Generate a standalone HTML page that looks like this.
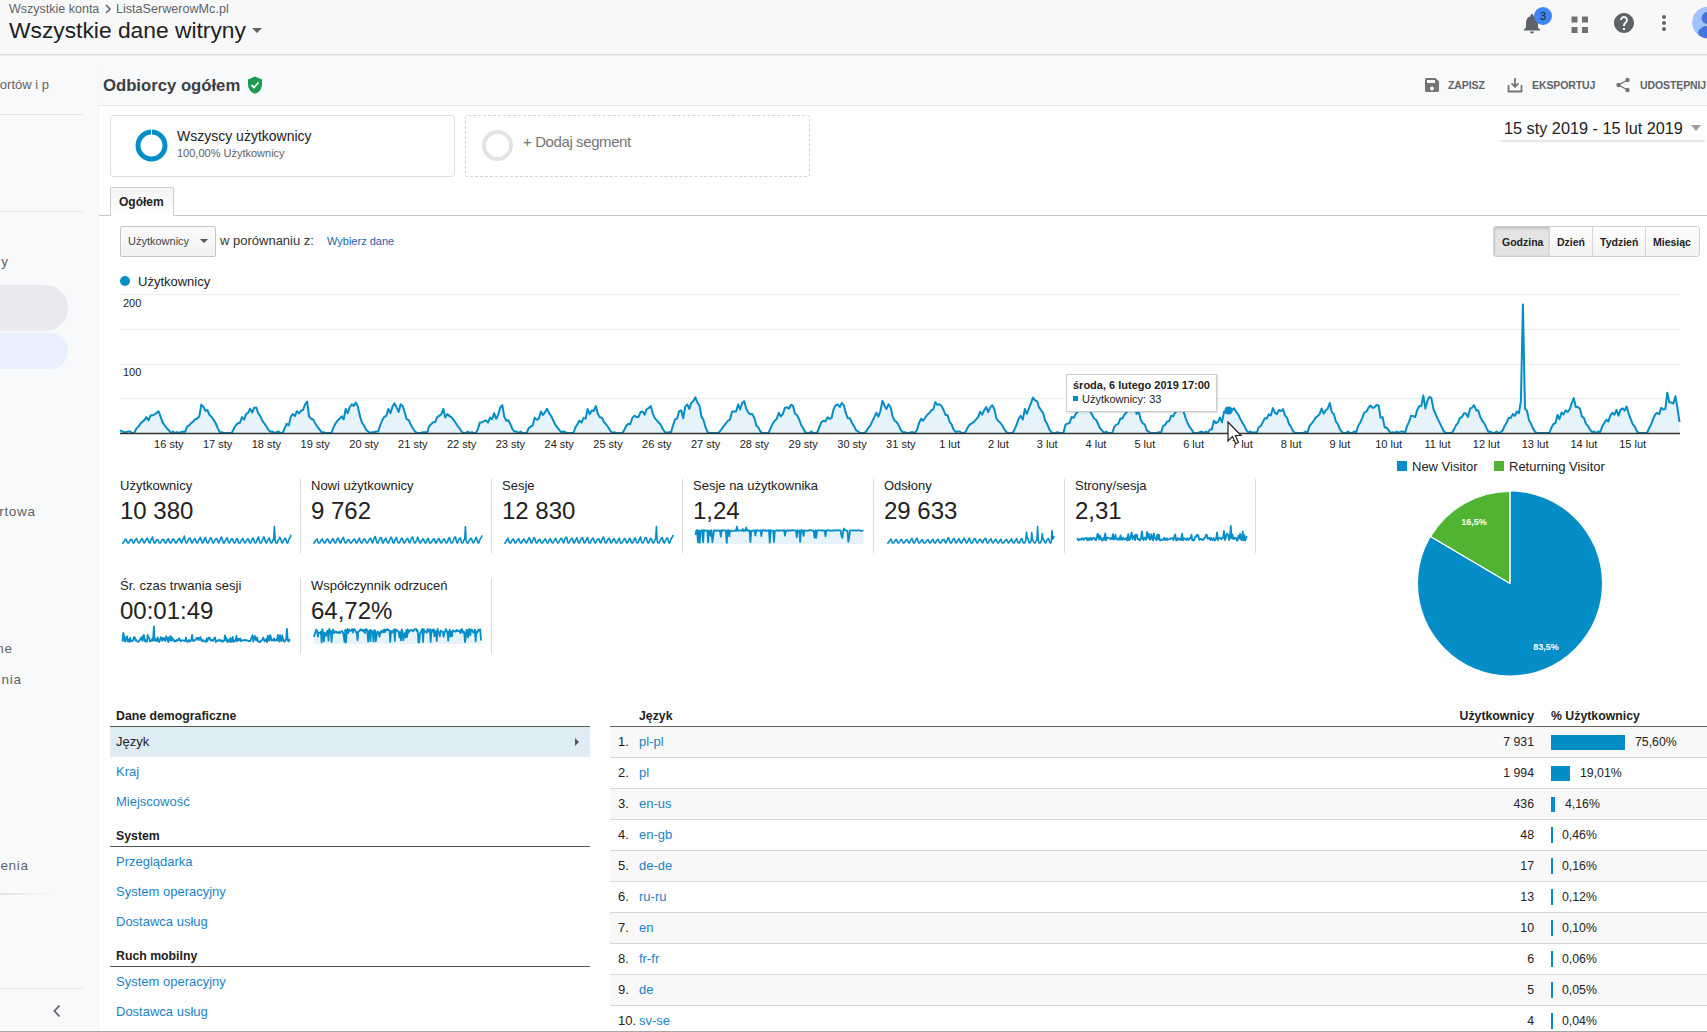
<!DOCTYPE html><html><head><meta charset="utf-8"><style>
*{margin:0;padding:0;box-sizing:border-box}
html,body{width:1707px;height:1032px;overflow:hidden;background:#f8f9fa;font-family:"Liberation Sans",sans-serif;color:#202124}
.a{position:absolute;white-space:nowrap}
.lnk{color:#1a83c6}
</style></head><body>
<div class="a" style="left:0;top:0;width:1707px;height:55px;background:#f8f8f8;border-bottom:1px solid #dadce0"></div><div class="a" style="left:0;top:55px;width:1707px;height:1px;background:#eceef0"></div><div class="a" style="left:9px;top:1px;font-size:12.5px;line-height:16px;color:#5f6368">Wszystkie konta</div><svg class="a" style="left:104px;top:4px" width="8" height="10" viewBox="0 0 8 10"><path d="M2 1l4 4-4 4" stroke="#5f6368" stroke-width="1.5" fill="none"/></svg><div class="a" style="left:116px;top:1px;font-size:12.6px;line-height:16px;color:#5f6368">ListaSerwerowMc.pl</div><div class="a" style="left:9px;top:17px;font-size:22.8px;line-height:26px;color:#202124">Wszystkie dane witryny</div><div class="a" style="left:252px;top:28px;width:0;height:0;border-left:5px solid transparent;border-right:5px solid transparent;border-top:5px solid #5f6368"></div><svg class="a" style="left:1516px;top:6px" width="36" height="32" viewBox="0 0 36 32">
<path d="M16 27.5c1.1 0 2-.9 2-2h-4c0 1.1.9 2 2 2zm6-6v-5c0-3.07-1.64-5.64-4.5-6.32V9.5c0-.83-.67-1.5-1.5-1.5s-1.5.67-1.5 1.5v.68C11.63 10.86 10 13.42 10 16.5v5l-2 2v1h16v-1l-2-2z" fill="#5f6368"/>
<circle cx="27" cy="10" r="9" fill="#4285f4"/><text x="27" y="14" font-size="11" text-anchor="middle" fill="#202124" font-family="Liberation Sans">3</text></svg><svg class="a" style="left:1571px;top:16px" width="18" height="18" viewBox="0 0 18 18" fill="#707070">
<rect x="0.5" y="0.5" width="6" height="6"/><rect x="11" y="0.5" width="6" height="6"/><rect x="0.5" y="11" width="6" height="6"/><rect x="11" y="11" width="6" height="6"/></svg><svg class="a" style="left:1612px;top:11px" width="24" height="24" viewBox="0 0 24 24"><path fill="#5f6368" d="M12 2C6.48 2 2 6.48 2 12s4.48 10 10 10 10-4.48 10-10S17.52 2 12 2zm1 17h-2v-2h2v2zm2.07-7.75l-.9.92C13.45 12.9 13 13.5 13 15h-2v-.5c0-1.1.45-2.1 1.17-2.83l1.24-1.26c.37-.36.59-.86.59-1.41 0-1.1-.9-2-2-2s-2 .9-2 2H8c0-2.21 1.79-4 4-4s4 1.79 4 4c0 .88-.36 1.68-.93 2.25z"/></svg><svg class="a" style="left:1660px;top:13px" width="8" height="20" viewBox="0 0 8 20" fill="#5f6368"><circle cx="4" cy="4" r="2"/><circle cx="4" cy="10" r="2"/><circle cx="4" cy="16" r="2"/></svg><svg class="a" style="left:1690px;top:6px" width="17" height="34" viewBox="0 0 17 34"><defs><clipPath id="av"><circle cx="18" cy="16.5" r="16"/></clipPath></defs><g clip-path="url(#av)"><circle cx="18" cy="16.5" r="16" fill="#a1c2fa"/><circle cx="17.5" cy="12" r="6" fill="#4374e0"/><ellipse cx="19" cy="26.5" rx="11" ry="6.5" fill="#4374e0"/></g></svg><div class="a" style="left:98px;top:68px;width:1px;height:963px;background:#f3f4f5"></div><div class="a" style="right:1658px;top:77px;font-size:13px;letter-spacing:0px;color:#5f6368">Raportów i p</div><div class="a" style="left:0;top:114px;width:83px;height:1px;background:#e3e4e6"></div><div class="a" style="left:0;top:211px;width:83px;height:1px;background:#e3e4e6"></div><div class="a" style="right:1698.3px;top:254px;font-size:13.5px;letter-spacing:0.7px;color:#5f6368">y</div><div class="a" style="left:-40px;top:285px;width:108px;height:46px;border-radius:0 23px 23px 0;background:#e8eaed"></div><div class="a" style="left:-40px;top:333px;width:108px;height:36px;border-radius:0 18px 18px 0;background:#e8f0fe"></div><div class="a" style="right:1671.3px;top:504px;font-size:13.5px;letter-spacing:0.7px;color:#5f6368">rtowa</div><div class="a" style="right:1694.3px;top:641px;font-size:13.5px;letter-spacing:0.7px;color:#5f6368">ne</div><div class="a" style="right:1685.3px;top:672px;font-size:13.5px;letter-spacing:0.7px;color:#5f6368">nia</div><div class="a" style="right:1678.3px;top:858px;font-size:13.5px;letter-spacing:0.7px;color:#5f6368">enia</div><div class="a" style="left:0;top:893px;width:56px;height:2px;background:linear-gradient(90deg,#e3e4e6,rgba(227,228,230,0))"></div><div class="a" style="left:0;top:988px;width:83px;height:1px;background:#e3e4e6"></div><svg class="a" style="left:52px;top:1004px" width="10" height="14" viewBox="0 0 10 14"><path d="M7.5 1.5L2.5 7l5 5.5" stroke="#5f6368" stroke-width="1.8" fill="none"/></svg><div class="a" style="left:103px;top:76px;font-size:16.7px;font-weight:bold;color:#3c4043">Odbiorcy ogółem</div><svg class="a" style="left:247px;top:76px" width="16" height="18" viewBox="0 0 16 18"><path d="M8 0.5L1 3.5v5c0 4.3 3 8.2 7 9.2 4-1 7-4.9 7-9.2v-5z" fill="#1c9a52"/><path d="M4.5 9l2.5 2.5 4.5-5" stroke="#fff" stroke-width="1.8" fill="none"/></svg><svg class="a" style="left:1424px;top:77px" width="16" height="16" viewBox="0 0 16 16"><path d="M11.5 1H2.5C1.7 1 1 1.7 1 2.5v11c0 .8.7 1.5 1.5 1.5h11c.8 0 1.5-.7 1.5-1.5V4.5zM8 13.5c-1.1 0-2-.9-2-2s.9-2 2-2 2 .9 2 2-.9 2-2 2zM11 6H3V3h8z" fill="#757575"/></svg><div class="a" style="left:1448px;top:78px;font-size:10.5px;letter-spacing:-0.1px;font-weight:bold;color:#5f6368;line-height:14px">ZAPISZ</div><svg class="a" style="left:1507px;top:77px" width="16" height="16" viewBox="0 0 16 16"><path d="M8 1v8.5M4.5 6.3L8 9.8l3.5-3.5M1.5 8v6.5h13V8" stroke="#757575" stroke-width="1.8" fill="none" stroke-linejoin="round"/></svg><div class="a" style="left:1532px;top:78px;font-size:10.5px;letter-spacing:-0.1px;font-weight:bold;color:#5f6368;line-height:14px">EKSPORTUJ</div><svg class="a" style="left:1615px;top:77px" width="16" height="16" viewBox="0 0 16 16"><circle cx="12.5" cy="3" r="2.2" fill="#757575"/><circle cx="3.5" cy="8" r="2.2" fill="#757575"/><circle cx="12.5" cy="13" r="2.2" fill="#757575"/><path d="M12.5 3L3.5 8l9 5" stroke="#757575" stroke-width="1.4" fill="none"/></svg><div class="a" style="left:1640px;top:78px;font-size:10.5px;letter-spacing:-0.1px;font-weight:bold;color:#5f6368;line-height:14px">UDOSTĘPNIJ</div><div class="a" style="left:99px;top:105px;width:1608px;height:926px;background:#fff;border-top:1px solid #e8e8e8"></div><div class="a" style="left:0;top:1030.5px;width:1707px;height:1.5px;background:#a8a8a8"></div><div class="a" style="left:110px;top:115px;width:345px;height:62px;border:1px solid #e0e0e0;border-radius:3px;background:#fff"></div><svg class="a" style="left:135px;top:129px" width="33" height="33" viewBox="0 0 33 33"><circle cx="16.5" cy="16.5" r="13.5" stroke="#058dc7" stroke-width="5" fill="none"/><rect x="16" y="0" width="1" height="6" fill="#fff"/></svg><div class="a" style="left:177px;top:128px;font-size:14px;color:#202124">Wszyscy użytkownicy</div><div class="a" style="left:177px;top:147px;font-size:11px;color:#616161">100,00% Użytkownicy</div><div class="a" style="left:465px;top:115px;width:345px;height:62px;border:1px dashed #d5d5d5;border-radius:3px"></div><svg class="a" style="left:481px;top:129px" width="33" height="33" viewBox="0 0 33 33"><circle cx="16.5" cy="16.5" r="13.5" stroke="#e3e3e3" stroke-width="4" fill="none"/></svg><div class="a" style="left:523px;top:133px;font-size:15px;letter-spacing:-0.4px;color:#757575">+ Dodaj segment</div><div class="a" style="left:1504px;top:119px;font-size:16.25px;color:#202124">15 sty 2019 - 15 lut 2019</div><div class="a" style="left:1691px;top:125px;width:0;height:0;border-left:5.5px solid transparent;border-right:5.5px solid transparent;border-top:6px solid #a0a0a0"></div><div class="a" style="left:1501px;top:140px;width:204px;height:2px;background:#e6e6e6"></div><div class="a" style="left:99px;top:215px;width:1608px;height:1px;background:#c8c8c8"></div><div class="a" style="left:110px;top:187px;width:64px;height:29px;border:1px solid #d0d0d0;border-bottom:none;background:linear-gradient(#f4f4f4,#fff);border-radius:2px 2px 0 0"></div><div class="a" style="left:119px;top:195px;font-size:12px;font-weight:bold;color:#222">Ogółem</div><div class="a" style="left:120px;top:226px;width:96px;height:31px;border:1px solid #c6c6c6;border-radius:2px;background:linear-gradient(#fbfbfb,#f1f1f1)"></div><div class="a" style="left:128px;top:235px;font-size:11px;color:#444">Użytkownicy</div><div class="a" style="left:200px;top:239px;width:0;height:0;border-left:4px solid transparent;border-right:4px solid transparent;border-top:4px solid #555"></div><div class="a" style="left:220px;top:233px;font-size:13px;color:#333">w porównaniu z:</div><div class="a" style="left:327px;top:235px;font-size:11px;color:#2362ac">Wybierz dane</div><div class="a" style="left:1493px;top:226px;width:207px;height:31px;border:1px solid #cfcfcf;border-radius:3px;background:linear-gradient(#fdfdfd,#f3f3f3);overflow:hidden"><div class="a" style="left:0;top:0;width:56px;height:29px;background:#e4e4e4;box-shadow:inset 0 1px 3px rgba(0,0,0,.25)"></div><div class="a" style="left:55px;top:0;width:1px;height:29px;background:#d6d6d6"></div><div class="a" style="left:98px;top:0;width:1px;height:29px;background:#d6d6d6"></div><div class="a" style="left:151px;top:0;width:1px;height:29px;background:#d6d6d6"></div><div class="a" style="left:8px;top:9px;font-size:10.5px;font-weight:bold;color:#222">Godzina</div><div class="a" style="left:63px;top:9px;font-size:10.5px;font-weight:bold;color:#222">Dzień</div><div class="a" style="left:106px;top:9px;font-size:10.5px;font-weight:bold;color:#222">Tydzień</div><div class="a" style="left:159px;top:9px;font-size:10.5px;font-weight:bold;color:#222">Miesiąc</div></div><div class="a" style="left:120px;top:276px;width:10px;height:10px;border-radius:50%;background:#058dc7"></div><div class="a" style="left:138px;top:274px;font-size:13px;color:#222">Użytkownicy</div><svg class="a" style="left:0;top:0" width="1707" height="460" viewBox="0 0 1707 460"><line x1="120" x2="1680" y1="294.5" y2="294.5" stroke="#eeeeee" stroke-width="1"/><line x1="120" x2="1680" y1="329.5" y2="329.5" stroke="#eeeeee" stroke-width="1"/><line x1="120" x2="1680" y1="364.5" y2="364.5" stroke="#eeeeee" stroke-width="1"/><line x1="120" x2="1680" y1="398.5" y2="398.5" stroke="#eeeeee" stroke-width="1"/><path d="M120.0 430.0 L122.0 431.5 L124.1 432.2 L126.1 432.2 L128.1 431.5 L130.2 431.5 L132.2 433.0 L134.2 433.0 L136.3 428.6 L138.3 426.6 L140.3 423.8 L142.4 421.7 L144.4 420.1 L146.4 417.1 L148.5 420.4 L150.5 415.6 L152.5 415.3 L154.6 414.4 L156.6 412.9 L158.6 411.3 L160.7 416.9 L162.7 422.7 L164.7 425.5 L166.8 428.2 L168.8 430.2 L170.8 433.0 L172.9 431.5 L174.9 433.0 L176.9 432.2 L179.0 433.0 L181.0 432.2 L183.0 431.5 L185.1 431.8 L187.1 426.6 L189.1 425.4 L191.2 423.1 L193.2 421.5 L195.2 419.2 L197.3 418.5 L199.3 416.3 L201.3 404.6 L203.4 406.7 L205.4 410.7 L207.4 410.0 L209.5 415.0 L211.5 416.7 L213.5 419.6 L215.6 423.0 L217.6 427.9 L219.6 431.9 L221.7 432.2 L223.7 433.0 L225.7 433.0 L227.8 433.0 L229.8 433.0 L231.8 433.0 L233.9 428.4 L235.9 425.3 L237.9 423.3 L240.0 422.7 L242.0 417.0 L244.0 419.6 L246.1 414.2 L248.1 412.9 L250.1 408.8 L252.2 412.5 L254.2 407.7 L256.2 407.4 L258.3 413.5 L260.3 416.1 L262.3 420.7 L264.4 423.5 L266.4 426.5 L268.4 429.8 L270.5 431.7 L272.5 431.5 L274.5 433.0 L276.6 432.2 L278.6 431.5 L280.6 433.0 L282.7 433.0 L284.7 428.2 L286.7 423.9 L288.8 425.4 L290.8 416.6 L292.8 414.0 L294.9 416.1 L296.9 411.2 L298.9 413.4 L301.0 410.8 L303.0 410.0 L305.0 404.5 L307.1 401.6 L309.1 416.5 L311.1 418.8 L313.2 419.5 L315.2 423.3 L317.2 426.6 L319.3 429.2 L321.3 432.0 L323.3 432.2 L325.4 433.0 L327.4 433.0 L329.4 433.0 L331.5 433.0 L333.5 427.3 L335.5 423.6 L337.6 420.5 L339.6 418.9 L341.6 416.4 L343.7 419.3 L345.7 408.9 L347.7 413.2 L349.8 407.0 L351.8 404.3 L353.8 405.9 L355.9 402.6 L357.9 406.9 L359.9 416.1 L362.0 422.6 L364.0 425.5 L366.0 429.6 L368.1 431.5 L370.1 433.0 L372.1 432.2 L374.2 432.2 L376.2 431.5 L378.2 431.5 L380.3 425.0 L382.3 420.0 L384.3 416.8 L386.4 415.7 L388.4 408.9 L390.4 413.2 L392.5 406.6 L394.5 403.4 L396.5 407.2 L398.6 411.9 L400.6 404.2 L402.6 405.9 L404.7 412.2 L406.7 419.4 L408.7 420.0 L410.8 424.6 L412.8 428.2 L414.8 431.3 L416.9 433.0 L418.9 433.0 L420.9 433.0 L423.0 432.2 L425.0 432.2 L427.0 433.0 L429.1 426.1 L431.1 424.2 L433.1 422.3 L435.2 422.1 L437.2 417.1 L439.2 415.9 L441.3 414.2 L443.3 409.0 L445.3 417.6 L447.4 414.0 L449.4 416.0 L451.4 417.1 L453.5 419.9 L455.5 422.5 L457.5 425.8 L459.6 428.2 L461.6 431.7 L463.6 433.0 L465.7 433.0 L467.7 431.5 L469.7 433.0 L471.8 432.2 L473.8 433.0 L475.8 433.0 L477.9 429.3 L479.9 422.4 L481.9 422.3 L484.0 421.0 L486.0 420.4 L488.0 422.6 L490.1 417.5 L492.1 419.3 L494.1 413.2 L496.2 418.8 L498.2 414.7 L500.2 407.6 L502.3 405.1 L504.3 416.8 L506.3 420.8 L508.4 420.2 L510.4 424.2 L512.4 429.0 L514.4 431.6 L516.5 431.5 L518.5 433.0 L520.5 431.5 L522.6 433.0 L524.6 433.0 L526.6 433.0 L528.7 428.1 L530.7 426.7 L532.7 425.4 L534.8 417.6 L536.8 419.8 L538.8 418.6 L540.9 411.5 L542.9 415.0 L544.9 412.4 L547.0 408.8 L549.0 412.9 L551.0 415.8 L553.1 420.0 L555.1 424.4 L557.1 427.2 L559.2 429.8 L561.2 432.2 L563.2 431.5 L565.3 432.2 L567.3 433.0 L569.3 433.0 L571.4 433.0 L573.4 433.0 L575.4 427.6 L577.5 423.9 L579.5 420.5 L581.5 422.6 L583.6 418.0 L585.6 418.5 L587.6 409.0 L589.7 414.2 L591.7 410.5 L593.7 411.0 L595.8 406.1 L597.8 413.8 L599.8 417.3 L601.9 417.5 L603.9 422.0 L605.9 424.2 L608.0 427.0 L610.0 430.3 L612.0 433.0 L614.1 432.2 L616.1 433.0 L618.1 433.0 L620.2 433.0 L622.2 433.0 L624.2 430.1 L626.3 425.7 L628.3 423.7 L630.3 424.3 L632.4 417.9 L634.4 415.7 L636.4 416.9 L638.5 417.1 L640.5 412.2 L642.5 411.4 L644.6 414.7 L646.6 409.4 L648.6 408.2 L650.7 406.1 L652.7 413.3 L654.7 417.8 L656.8 420.5 L658.8 422.5 L660.8 424.8 L662.9 429.3 L664.9 431.9 L666.9 433.0 L669.0 432.2 L671.0 432.2 L673.0 425.6 L675.1 419.4 L677.1 418.6 L679.1 411.3 L681.2 410.3 L683.2 418.3 L685.2 406.6 L687.3 404.5 L689.3 408.9 L691.3 402.9 L693.4 400.9 L695.4 397.3 L697.4 402.6 L699.5 405.7 L701.5 416.8 L703.5 420.0 L705.6 427.4 L707.6 432.1 L709.6 433.0 L711.7 433.0 L713.7 433.0 L715.7 433.0 L717.8 433.0 L719.8 431.5 L721.8 428.9 L723.9 425.8 L725.9 423.4 L727.9 420.9 L730.0 419.5 L732.0 411.8 L734.0 411.6 L736.1 411.4 L738.1 404.4 L740.1 409.5 L742.2 403.0 L744.2 401.1 L746.2 408.8 L748.3 412.4 L750.3 414.2 L752.3 414.0 L754.4 418.1 L756.4 425.7 L758.4 427.4 L760.5 431.6 L762.5 433.0 L764.5 433.0 L766.6 433.0 L768.6 433.0 L770.6 428.2 L772.7 423.6 L774.7 420.9 L776.7 418.9 L778.8 412.9 L780.8 416.4 L782.8 414.2 L784.9 407.9 L786.9 407.2 L788.9 408.7 L791.0 404.7 L793.0 405.9 L795.0 413.4 L797.1 415.2 L799.1 419.4 L801.1 425.0 L803.2 428.3 L805.2 432.2 L807.2 433.0 L809.3 433.0 L811.3 431.5 L813.3 433.0 L815.4 433.0 L817.4 432.2 L819.4 426.8 L821.5 422.1 L823.5 420.8 L825.5 421.4 L827.6 417.3 L829.6 418.9 L831.6 418.0 L833.7 408.8 L835.7 405.3 L837.7 404.3 L839.8 407.0 L841.8 402.9 L843.8 405.1 L845.9 413.4 L847.9 418.3 L849.9 418.2 L852.0 423.0 L854.0 426.1 L856.0 430.1 L858.1 431.5 L860.1 433.0 L862.1 433.0 L864.2 433.0 L866.2 431.5 L868.2 428.2 L870.3 425.7 L872.3 421.1 L874.3 417.2 L876.4 412.7 L878.4 416.6 L880.4 411.0 L882.5 400.8 L884.5 405.5 L886.5 408.9 L888.6 404.2 L890.6 407.3 L892.6 416.4 L894.7 420.8 L896.7 422.1 L898.7 425.3 L900.8 430.0 L902.8 432.2 L904.8 432.2 L906.9 433.0 L908.9 433.0 L910.9 432.2 L913.0 432.2 L915.0 433.0 L917.0 429.8 L919.1 422.9 L921.1 418.7 L923.1 420.7 L925.2 417.7 L927.2 414.8 L929.2 413.2 L931.3 410.4 L933.3 409.3 L935.3 402.1 L937.4 404.8 L939.4 404.3 L941.4 405.7 L943.5 409.8 L945.5 415.0 L947.5 415.0 L949.6 421.8 L951.6 424.3 L953.6 429.6 L955.7 431.9 L957.7 431.5 L959.7 431.5 L961.8 433.0 L963.8 433.0 L965.8 431.5 L967.9 427.1 L969.9 424.3 L971.9 423.4 L974.0 421.8 L976.0 419.3 L978.0 417.4 L980.1 411.8 L982.1 414.7 L984.1 410.3 L986.2 407.1 L988.2 412.0 L990.2 407.7 L992.3 405.2 L994.3 408.9 L996.3 418.1 L998.4 421.3 L1000.4 422.8 L1002.4 425.7 L1004.5 429.4 L1006.5 432.3 L1008.5 433.0 L1010.6 433.0 L1012.6 433.0 L1014.6 429.4 L1016.7 424.3 L1018.7 418.7 L1020.7 415.8 L1022.8 419.5 L1024.8 408.9 L1026.8 413.8 L1028.9 408.4 L1030.9 403.3 L1032.9 397.6 L1035.0 400.4 L1037.0 401.0 L1039.0 407.1 L1041.1 410.3 L1043.1 413.1 L1045.1 420.5 L1047.2 424.1 L1049.2 428.9 L1051.2 432.2 L1053.3 433.0 L1055.3 433.0 L1057.3 432.2 L1059.4 433.0 L1061.4 433.0 L1063.4 433.0 L1065.5 424.7 L1067.5 423.6 L1069.5 423.1 L1071.6 416.9 L1073.6 417.9 L1075.6 414.2 L1077.7 411.6 L1079.7 410.3 L1081.7 407.9 L1083.8 408.9 L1085.8 401.4 L1087.8 408.1 L1089.9 411.0 L1091.9 414.3 L1093.9 418.2 L1096.0 419.7 L1098.0 423.7 L1100.0 428.2 L1102.1 430.4 L1104.1 433.0 L1106.1 431.5 L1108.2 433.0 L1110.2 433.0 L1112.2 433.0 L1114.3 426.8 L1116.3 424.6 L1118.3 423.9 L1120.4 418.5 L1122.4 418.5 L1124.4 414.7 L1126.5 412.4 L1128.5 409.5 L1130.5 404.7 L1132.6 408.7 L1134.6 406.3 L1136.6 413.9 L1138.7 411.2 L1140.7 419.7 L1142.7 423.2 L1144.8 424.5 L1146.8 430.3 L1148.8 431.9 L1150.9 433.0 L1152.9 433.0 L1154.9 433.0 L1157.0 433.0 L1159.0 432.2 L1161.0 433.0 L1163.1 425.9 L1165.1 425.0 L1167.1 421.5 L1169.2 421.2 L1171.2 415.7 L1173.2 416.4 L1175.3 412.1 L1177.3 411.2 L1179.3 410.3 L1181.4 405.7 L1183.4 410.7 L1185.4 417.4 L1187.5 423.0 L1189.5 426.7 L1191.5 429.3 L1193.6 433.0 L1195.6 433.0 L1197.6 433.0 L1199.7 432.2 L1201.7 431.5 L1203.7 433.0 L1205.8 431.5 L1207.8 433.0 L1209.8 429.7 L1211.9 429.3 L1213.9 420.7 L1215.9 423.1 L1218.0 421.8 L1220.0 417.5 L1222.0 422.3 L1224.1 411.4 L1226.1 412.7 L1228.1 410.3 L1230.2 412.7 L1232.2 409.9 L1234.2 408.4 L1236.3 411.9 L1238.3 414.5 L1240.3 418.9 L1242.4 422.9 L1244.4 425.8 L1246.4 430.1 L1248.5 432.6 L1250.5 431.5 L1252.5 433.0 L1254.6 432.2 L1256.6 433.0 L1258.6 427.5 L1260.7 426.0 L1262.7 422.6 L1264.7 418.3 L1266.8 418.5 L1268.8 414.3 L1270.8 415.5 L1272.9 408.1 L1274.9 412.6 L1276.9 414.1 L1279.0 410.0 L1281.0 411.1 L1283.0 409.1 L1285.1 415.6 L1287.1 417.7 L1289.1 424.2 L1291.1 426.8 L1293.2 431.4 L1295.2 433.0 L1297.2 433.0 L1299.3 433.0 L1301.3 433.0 L1303.3 433.0 L1305.4 431.5 L1307.4 433.0 L1309.4 426.2 L1311.5 423.7 L1313.5 421.2 L1315.5 417.7 L1317.6 415.9 L1319.6 414.2 L1321.6 408.6 L1323.7 413.7 L1325.7 410.3 L1327.7 408.7 L1329.8 403.0 L1331.8 412.1 L1333.8 414.1 L1335.9 421.6 L1337.9 424.1 L1339.9 429.4 L1342.0 432.2 L1344.0 433.0 L1346.0 433.0 L1348.1 431.5 L1350.1 433.0 L1352.1 433.0 L1354.2 431.5 L1356.2 432.2 L1358.2 425.7 L1360.3 422.5 L1362.3 417.8 L1364.3 412.6 L1366.4 411.6 L1368.4 407.9 L1370.4 405.5 L1372.5 407.7 L1374.5 407.4 L1376.5 405.0 L1378.6 405.4 L1380.6 417.8 L1382.6 417.1 L1384.7 427.4 L1386.7 427.6 L1388.7 430.4 L1390.8 433.0 L1392.8 432.2 L1394.8 433.0 L1396.9 431.5 L1398.9 433.0 L1400.9 431.5 L1403.0 431.5 L1405.0 433.0 L1407.0 426.1 L1409.1 421.9 L1411.1 415.8 L1413.1 416.1 L1415.2 417.0 L1417.2 409.9 L1419.2 406.2 L1421.3 405.9 L1423.3 395.4 L1425.3 408.4 L1427.4 400.9 L1429.4 396.9 L1431.4 398.2 L1433.5 409.0 L1435.5 413.8 L1437.5 418.4 L1439.6 422.6 L1441.6 426.7 L1443.6 431.0 L1445.7 433.0 L1447.7 433.0 L1449.7 433.0 L1451.8 433.0 L1453.8 429.9 L1455.8 425.6 L1457.9 423.2 L1459.9 418.2 L1461.9 416.9 L1464.0 413.2 L1466.0 413.6 L1468.0 416.9 L1470.1 408.6 L1472.1 407.6 L1474.1 405.0 L1476.2 410.4 L1478.2 410.3 L1480.2 416.7 L1482.3 420.8 L1484.3 423.4 L1486.3 427.6 L1488.4 431.7 L1490.4 431.5 L1492.4 433.0 L1494.5 433.0 L1496.5 431.5 L1498.5 433.0 L1500.6 432.2 L1502.6 430.5 L1504.6 426.0 L1506.7 422.6 L1508.7 417.9 L1510.7 418.0 L1512.8 414.1 L1514.8 415.9 L1516.8 411.5 L1518.9 413.3 L1520.9 400.9 L1522.9 304.5 L1525.0 408.6 L1527.0 411.0 L1529.0 420.1 L1531.1 424.0 L1533.1 428.6 L1535.1 431.8 L1537.2 433.0 L1539.2 433.0 L1541.2 433.0 L1543.3 433.0 L1545.3 433.0 L1547.3 433.0 L1549.4 433.0 L1551.4 427.7 L1553.4 424.1 L1555.5 423.0 L1557.5 414.9 L1559.5 419.1 L1561.6 412.5 L1563.6 414.4 L1565.6 410.4 L1567.7 412.0 L1569.7 409.4 L1571.7 403.4 L1573.8 398.1 L1575.8 407.0 L1577.8 407.1 L1579.9 408.6 L1581.9 416.7 L1583.9 417.9 L1586.0 423.9 L1588.0 425.9 L1590.0 429.6 L1592.1 432.2 L1594.1 431.5 L1596.1 433.0 L1598.2 431.5 L1600.2 431.9 L1602.2 426.6 L1604.3 423.0 L1606.3 419.7 L1608.3 421.6 L1610.4 415.3 L1612.4 412.7 L1614.4 414.8 L1616.5 409.9 L1618.5 415.6 L1620.5 409.9 L1622.6 408.4 L1624.6 410.6 L1626.6 406.6 L1628.7 413.6 L1630.7 419.1 L1632.7 424.1 L1634.8 426.7 L1636.8 431.2 L1638.8 433.0 L1640.9 433.0 L1642.9 433.0 L1644.9 433.0 L1647.0 433.0 L1649.0 428.3 L1651.0 424.9 L1653.1 419.2 L1655.1 414.5 L1657.1 412.9 L1659.2 414.1 L1661.2 407.9 L1663.2 409.5 L1665.3 409.0 L1667.3 392.7 L1669.3 402.2 L1671.4 402.6 L1673.4 403.6 L1675.4 396.2 L1677.5 408.4 L1679.5 422.0 L1679.5 433.0 L120.0 433.0 Z" fill="#e6f3fa"/><path d="M120.0 430.0 L122.0 431.5 L124.1 432.2 L126.1 432.2 L128.1 431.5 L130.2 431.5 L132.2 433.0 L134.2 433.0 L136.3 428.6 L138.3 426.6 L140.3 423.8 L142.4 421.7 L144.4 420.1 L146.4 417.1 L148.5 420.4 L150.5 415.6 L152.5 415.3 L154.6 414.4 L156.6 412.9 L158.6 411.3 L160.7 416.9 L162.7 422.7 L164.7 425.5 L166.8 428.2 L168.8 430.2 L170.8 433.0 L172.9 431.5 L174.9 433.0 L176.9 432.2 L179.0 433.0 L181.0 432.2 L183.0 431.5 L185.1 431.8 L187.1 426.6 L189.1 425.4 L191.2 423.1 L193.2 421.5 L195.2 419.2 L197.3 418.5 L199.3 416.3 L201.3 404.6 L203.4 406.7 L205.4 410.7 L207.4 410.0 L209.5 415.0 L211.5 416.7 L213.5 419.6 L215.6 423.0 L217.6 427.9 L219.6 431.9 L221.7 432.2 L223.7 433.0 L225.7 433.0 L227.8 433.0 L229.8 433.0 L231.8 433.0 L233.9 428.4 L235.9 425.3 L237.9 423.3 L240.0 422.7 L242.0 417.0 L244.0 419.6 L246.1 414.2 L248.1 412.9 L250.1 408.8 L252.2 412.5 L254.2 407.7 L256.2 407.4 L258.3 413.5 L260.3 416.1 L262.3 420.7 L264.4 423.5 L266.4 426.5 L268.4 429.8 L270.5 431.7 L272.5 431.5 L274.5 433.0 L276.6 432.2 L278.6 431.5 L280.6 433.0 L282.7 433.0 L284.7 428.2 L286.7 423.9 L288.8 425.4 L290.8 416.6 L292.8 414.0 L294.9 416.1 L296.9 411.2 L298.9 413.4 L301.0 410.8 L303.0 410.0 L305.0 404.5 L307.1 401.6 L309.1 416.5 L311.1 418.8 L313.2 419.5 L315.2 423.3 L317.2 426.6 L319.3 429.2 L321.3 432.0 L323.3 432.2 L325.4 433.0 L327.4 433.0 L329.4 433.0 L331.5 433.0 L333.5 427.3 L335.5 423.6 L337.6 420.5 L339.6 418.9 L341.6 416.4 L343.7 419.3 L345.7 408.9 L347.7 413.2 L349.8 407.0 L351.8 404.3 L353.8 405.9 L355.9 402.6 L357.9 406.9 L359.9 416.1 L362.0 422.6 L364.0 425.5 L366.0 429.6 L368.1 431.5 L370.1 433.0 L372.1 432.2 L374.2 432.2 L376.2 431.5 L378.2 431.5 L380.3 425.0 L382.3 420.0 L384.3 416.8 L386.4 415.7 L388.4 408.9 L390.4 413.2 L392.5 406.6 L394.5 403.4 L396.5 407.2 L398.6 411.9 L400.6 404.2 L402.6 405.9 L404.7 412.2 L406.7 419.4 L408.7 420.0 L410.8 424.6 L412.8 428.2 L414.8 431.3 L416.9 433.0 L418.9 433.0 L420.9 433.0 L423.0 432.2 L425.0 432.2 L427.0 433.0 L429.1 426.1 L431.1 424.2 L433.1 422.3 L435.2 422.1 L437.2 417.1 L439.2 415.9 L441.3 414.2 L443.3 409.0 L445.3 417.6 L447.4 414.0 L449.4 416.0 L451.4 417.1 L453.5 419.9 L455.5 422.5 L457.5 425.8 L459.6 428.2 L461.6 431.7 L463.6 433.0 L465.7 433.0 L467.7 431.5 L469.7 433.0 L471.8 432.2 L473.8 433.0 L475.8 433.0 L477.9 429.3 L479.9 422.4 L481.9 422.3 L484.0 421.0 L486.0 420.4 L488.0 422.6 L490.1 417.5 L492.1 419.3 L494.1 413.2 L496.2 418.8 L498.2 414.7 L500.2 407.6 L502.3 405.1 L504.3 416.8 L506.3 420.8 L508.4 420.2 L510.4 424.2 L512.4 429.0 L514.4 431.6 L516.5 431.5 L518.5 433.0 L520.5 431.5 L522.6 433.0 L524.6 433.0 L526.6 433.0 L528.7 428.1 L530.7 426.7 L532.7 425.4 L534.8 417.6 L536.8 419.8 L538.8 418.6 L540.9 411.5 L542.9 415.0 L544.9 412.4 L547.0 408.8 L549.0 412.9 L551.0 415.8 L553.1 420.0 L555.1 424.4 L557.1 427.2 L559.2 429.8 L561.2 432.2 L563.2 431.5 L565.3 432.2 L567.3 433.0 L569.3 433.0 L571.4 433.0 L573.4 433.0 L575.4 427.6 L577.5 423.9 L579.5 420.5 L581.5 422.6 L583.6 418.0 L585.6 418.5 L587.6 409.0 L589.7 414.2 L591.7 410.5 L593.7 411.0 L595.8 406.1 L597.8 413.8 L599.8 417.3 L601.9 417.5 L603.9 422.0 L605.9 424.2 L608.0 427.0 L610.0 430.3 L612.0 433.0 L614.1 432.2 L616.1 433.0 L618.1 433.0 L620.2 433.0 L622.2 433.0 L624.2 430.1 L626.3 425.7 L628.3 423.7 L630.3 424.3 L632.4 417.9 L634.4 415.7 L636.4 416.9 L638.5 417.1 L640.5 412.2 L642.5 411.4 L644.6 414.7 L646.6 409.4 L648.6 408.2 L650.7 406.1 L652.7 413.3 L654.7 417.8 L656.8 420.5 L658.8 422.5 L660.8 424.8 L662.9 429.3 L664.9 431.9 L666.9 433.0 L669.0 432.2 L671.0 432.2 L673.0 425.6 L675.1 419.4 L677.1 418.6 L679.1 411.3 L681.2 410.3 L683.2 418.3 L685.2 406.6 L687.3 404.5 L689.3 408.9 L691.3 402.9 L693.4 400.9 L695.4 397.3 L697.4 402.6 L699.5 405.7 L701.5 416.8 L703.5 420.0 L705.6 427.4 L707.6 432.1 L709.6 433.0 L711.7 433.0 L713.7 433.0 L715.7 433.0 L717.8 433.0 L719.8 431.5 L721.8 428.9 L723.9 425.8 L725.9 423.4 L727.9 420.9 L730.0 419.5 L732.0 411.8 L734.0 411.6 L736.1 411.4 L738.1 404.4 L740.1 409.5 L742.2 403.0 L744.2 401.1 L746.2 408.8 L748.3 412.4 L750.3 414.2 L752.3 414.0 L754.4 418.1 L756.4 425.7 L758.4 427.4 L760.5 431.6 L762.5 433.0 L764.5 433.0 L766.6 433.0 L768.6 433.0 L770.6 428.2 L772.7 423.6 L774.7 420.9 L776.7 418.9 L778.8 412.9 L780.8 416.4 L782.8 414.2 L784.9 407.9 L786.9 407.2 L788.9 408.7 L791.0 404.7 L793.0 405.9 L795.0 413.4 L797.1 415.2 L799.1 419.4 L801.1 425.0 L803.2 428.3 L805.2 432.2 L807.2 433.0 L809.3 433.0 L811.3 431.5 L813.3 433.0 L815.4 433.0 L817.4 432.2 L819.4 426.8 L821.5 422.1 L823.5 420.8 L825.5 421.4 L827.6 417.3 L829.6 418.9 L831.6 418.0 L833.7 408.8 L835.7 405.3 L837.7 404.3 L839.8 407.0 L841.8 402.9 L843.8 405.1 L845.9 413.4 L847.9 418.3 L849.9 418.2 L852.0 423.0 L854.0 426.1 L856.0 430.1 L858.1 431.5 L860.1 433.0 L862.1 433.0 L864.2 433.0 L866.2 431.5 L868.2 428.2 L870.3 425.7 L872.3 421.1 L874.3 417.2 L876.4 412.7 L878.4 416.6 L880.4 411.0 L882.5 400.8 L884.5 405.5 L886.5 408.9 L888.6 404.2 L890.6 407.3 L892.6 416.4 L894.7 420.8 L896.7 422.1 L898.7 425.3 L900.8 430.0 L902.8 432.2 L904.8 432.2 L906.9 433.0 L908.9 433.0 L910.9 432.2 L913.0 432.2 L915.0 433.0 L917.0 429.8 L919.1 422.9 L921.1 418.7 L923.1 420.7 L925.2 417.7 L927.2 414.8 L929.2 413.2 L931.3 410.4 L933.3 409.3 L935.3 402.1 L937.4 404.8 L939.4 404.3 L941.4 405.7 L943.5 409.8 L945.5 415.0 L947.5 415.0 L949.6 421.8 L951.6 424.3 L953.6 429.6 L955.7 431.9 L957.7 431.5 L959.7 431.5 L961.8 433.0 L963.8 433.0 L965.8 431.5 L967.9 427.1 L969.9 424.3 L971.9 423.4 L974.0 421.8 L976.0 419.3 L978.0 417.4 L980.1 411.8 L982.1 414.7 L984.1 410.3 L986.2 407.1 L988.2 412.0 L990.2 407.7 L992.3 405.2 L994.3 408.9 L996.3 418.1 L998.4 421.3 L1000.4 422.8 L1002.4 425.7 L1004.5 429.4 L1006.5 432.3 L1008.5 433.0 L1010.6 433.0 L1012.6 433.0 L1014.6 429.4 L1016.7 424.3 L1018.7 418.7 L1020.7 415.8 L1022.8 419.5 L1024.8 408.9 L1026.8 413.8 L1028.9 408.4 L1030.9 403.3 L1032.9 397.6 L1035.0 400.4 L1037.0 401.0 L1039.0 407.1 L1041.1 410.3 L1043.1 413.1 L1045.1 420.5 L1047.2 424.1 L1049.2 428.9 L1051.2 432.2 L1053.3 433.0 L1055.3 433.0 L1057.3 432.2 L1059.4 433.0 L1061.4 433.0 L1063.4 433.0 L1065.5 424.7 L1067.5 423.6 L1069.5 423.1 L1071.6 416.9 L1073.6 417.9 L1075.6 414.2 L1077.7 411.6 L1079.7 410.3 L1081.7 407.9 L1083.8 408.9 L1085.8 401.4 L1087.8 408.1 L1089.9 411.0 L1091.9 414.3 L1093.9 418.2 L1096.0 419.7 L1098.0 423.7 L1100.0 428.2 L1102.1 430.4 L1104.1 433.0 L1106.1 431.5 L1108.2 433.0 L1110.2 433.0 L1112.2 433.0 L1114.3 426.8 L1116.3 424.6 L1118.3 423.9 L1120.4 418.5 L1122.4 418.5 L1124.4 414.7 L1126.5 412.4 L1128.5 409.5 L1130.5 404.7 L1132.6 408.7 L1134.6 406.3 L1136.6 413.9 L1138.7 411.2 L1140.7 419.7 L1142.7 423.2 L1144.8 424.5 L1146.8 430.3 L1148.8 431.9 L1150.9 433.0 L1152.9 433.0 L1154.9 433.0 L1157.0 433.0 L1159.0 432.2 L1161.0 433.0 L1163.1 425.9 L1165.1 425.0 L1167.1 421.5 L1169.2 421.2 L1171.2 415.7 L1173.2 416.4 L1175.3 412.1 L1177.3 411.2 L1179.3 410.3 L1181.4 405.7 L1183.4 410.7 L1185.4 417.4 L1187.5 423.0 L1189.5 426.7 L1191.5 429.3 L1193.6 433.0 L1195.6 433.0 L1197.6 433.0 L1199.7 432.2 L1201.7 431.5 L1203.7 433.0 L1205.8 431.5 L1207.8 433.0 L1209.8 429.7 L1211.9 429.3 L1213.9 420.7 L1215.9 423.1 L1218.0 421.8 L1220.0 417.5 L1222.0 422.3 L1224.1 411.4 L1226.1 412.7 L1228.1 410.3 L1230.2 412.7 L1232.2 409.9 L1234.2 408.4 L1236.3 411.9 L1238.3 414.5 L1240.3 418.9 L1242.4 422.9 L1244.4 425.8 L1246.4 430.1 L1248.5 432.6 L1250.5 431.5 L1252.5 433.0 L1254.6 432.2 L1256.6 433.0 L1258.6 427.5 L1260.7 426.0 L1262.7 422.6 L1264.7 418.3 L1266.8 418.5 L1268.8 414.3 L1270.8 415.5 L1272.9 408.1 L1274.9 412.6 L1276.9 414.1 L1279.0 410.0 L1281.0 411.1 L1283.0 409.1 L1285.1 415.6 L1287.1 417.7 L1289.1 424.2 L1291.1 426.8 L1293.2 431.4 L1295.2 433.0 L1297.2 433.0 L1299.3 433.0 L1301.3 433.0 L1303.3 433.0 L1305.4 431.5 L1307.4 433.0 L1309.4 426.2 L1311.5 423.7 L1313.5 421.2 L1315.5 417.7 L1317.6 415.9 L1319.6 414.2 L1321.6 408.6 L1323.7 413.7 L1325.7 410.3 L1327.7 408.7 L1329.8 403.0 L1331.8 412.1 L1333.8 414.1 L1335.9 421.6 L1337.9 424.1 L1339.9 429.4 L1342.0 432.2 L1344.0 433.0 L1346.0 433.0 L1348.1 431.5 L1350.1 433.0 L1352.1 433.0 L1354.2 431.5 L1356.2 432.2 L1358.2 425.7 L1360.3 422.5 L1362.3 417.8 L1364.3 412.6 L1366.4 411.6 L1368.4 407.9 L1370.4 405.5 L1372.5 407.7 L1374.5 407.4 L1376.5 405.0 L1378.6 405.4 L1380.6 417.8 L1382.6 417.1 L1384.7 427.4 L1386.7 427.6 L1388.7 430.4 L1390.8 433.0 L1392.8 432.2 L1394.8 433.0 L1396.9 431.5 L1398.9 433.0 L1400.9 431.5 L1403.0 431.5 L1405.0 433.0 L1407.0 426.1 L1409.1 421.9 L1411.1 415.8 L1413.1 416.1 L1415.2 417.0 L1417.2 409.9 L1419.2 406.2 L1421.3 405.9 L1423.3 395.4 L1425.3 408.4 L1427.4 400.9 L1429.4 396.9 L1431.4 398.2 L1433.5 409.0 L1435.5 413.8 L1437.5 418.4 L1439.6 422.6 L1441.6 426.7 L1443.6 431.0 L1445.7 433.0 L1447.7 433.0 L1449.7 433.0 L1451.8 433.0 L1453.8 429.9 L1455.8 425.6 L1457.9 423.2 L1459.9 418.2 L1461.9 416.9 L1464.0 413.2 L1466.0 413.6 L1468.0 416.9 L1470.1 408.6 L1472.1 407.6 L1474.1 405.0 L1476.2 410.4 L1478.2 410.3 L1480.2 416.7 L1482.3 420.8 L1484.3 423.4 L1486.3 427.6 L1488.4 431.7 L1490.4 431.5 L1492.4 433.0 L1494.5 433.0 L1496.5 431.5 L1498.5 433.0 L1500.6 432.2 L1502.6 430.5 L1504.6 426.0 L1506.7 422.6 L1508.7 417.9 L1510.7 418.0 L1512.8 414.1 L1514.8 415.9 L1516.8 411.5 L1518.9 413.3 L1520.9 400.9 L1522.9 304.5 L1525.0 408.6 L1527.0 411.0 L1529.0 420.1 L1531.1 424.0 L1533.1 428.6 L1535.1 431.8 L1537.2 433.0 L1539.2 433.0 L1541.2 433.0 L1543.3 433.0 L1545.3 433.0 L1547.3 433.0 L1549.4 433.0 L1551.4 427.7 L1553.4 424.1 L1555.5 423.0 L1557.5 414.9 L1559.5 419.1 L1561.6 412.5 L1563.6 414.4 L1565.6 410.4 L1567.7 412.0 L1569.7 409.4 L1571.7 403.4 L1573.8 398.1 L1575.8 407.0 L1577.8 407.1 L1579.9 408.6 L1581.9 416.7 L1583.9 417.9 L1586.0 423.9 L1588.0 425.9 L1590.0 429.6 L1592.1 432.2 L1594.1 431.5 L1596.1 433.0 L1598.2 431.5 L1600.2 431.9 L1602.2 426.6 L1604.3 423.0 L1606.3 419.7 L1608.3 421.6 L1610.4 415.3 L1612.4 412.7 L1614.4 414.8 L1616.5 409.9 L1618.5 415.6 L1620.5 409.9 L1622.6 408.4 L1624.6 410.6 L1626.6 406.6 L1628.7 413.6 L1630.7 419.1 L1632.7 424.1 L1634.8 426.7 L1636.8 431.2 L1638.8 433.0 L1640.9 433.0 L1642.9 433.0 L1644.9 433.0 L1647.0 433.0 L1649.0 428.3 L1651.0 424.9 L1653.1 419.2 L1655.1 414.5 L1657.1 412.9 L1659.2 414.1 L1661.2 407.9 L1663.2 409.5 L1665.3 409.0 L1667.3 392.7 L1669.3 402.2 L1671.4 402.6 L1673.4 403.6 L1675.4 396.2 L1677.5 408.4 L1679.5 422.0" fill="none" stroke="#058dc7" stroke-width="2" stroke-linejoin="round"/><line x1="120" x2="1680" y1="433.5" y2="433.5" stroke="#333" stroke-width="1.3"/><g font-family="Liberation Sans" font-size="11" fill="#222"><text x="168.8" y="448" text-anchor="middle">16 sty</text><text x="217.6" y="448" text-anchor="middle">17 sty</text><text x="266.4" y="448" text-anchor="middle">18 sty</text><text x="315.2" y="448" text-anchor="middle">19 sty</text><text x="364.0" y="448" text-anchor="middle">20 sty</text><text x="412.8" y="448" text-anchor="middle">21 sty</text><text x="461.6" y="448" text-anchor="middle">22 sty</text><text x="510.4" y="448" text-anchor="middle">23 sty</text><text x="559.2" y="448" text-anchor="middle">24 sty</text><text x="608.0" y="448" text-anchor="middle">25 sty</text><text x="656.8" y="448" text-anchor="middle">26 sty</text><text x="705.6" y="448" text-anchor="middle">27 sty</text><text x="754.4" y="448" text-anchor="middle">28 sty</text><text x="803.2" y="448" text-anchor="middle">29 sty</text><text x="852.0" y="448" text-anchor="middle">30 sty</text><text x="900.8" y="448" text-anchor="middle">31 sty</text><text x="949.6" y="448" text-anchor="middle">1 lut</text><text x="998.4" y="448" text-anchor="middle">2 lut</text><text x="1047.2" y="448" text-anchor="middle">3 lut</text><text x="1096.0" y="448" text-anchor="middle">4 lut</text><text x="1144.8" y="448" text-anchor="middle">5 lut</text><text x="1193.6" y="448" text-anchor="middle">6 lut</text><text x="1242.4" y="448" text-anchor="middle">7 lut</text><text x="1291.1" y="448" text-anchor="middle">8 lut</text><text x="1339.9" y="448" text-anchor="middle">9 lut</text><text x="1388.7" y="448" text-anchor="middle">10 lut</text><text x="1437.5" y="448" text-anchor="middle">11 lut</text><text x="1486.3" y="448" text-anchor="middle">12 lut</text><text x="1535.1" y="448" text-anchor="middle">13 lut</text><text x="1583.9" y="448" text-anchor="middle">14 lut</text><text x="1632.7" y="448" text-anchor="middle">15 lut</text><text x="123" y="307">200</text><text x="123" y="376">100</text></g><circle cx="1228.5" cy="410.5" r="4" fill="#058dc7"/></svg><div class="a" style="left:1066px;top:374px;width:151px;height:38px;background:#fff;border:1px solid #ccc;box-shadow:1px 1px 2px rgba(0,0,0,.15)"></div><div class="a" style="left:1073px;top:379px;font-size:11px;font-weight:bold;color:#222">środa, 6 lutego 2019 17:00</div><div class="a" style="left:1073px;top:396px;width:5px;height:5px;background:#058dc7"></div><div class="a" style="left:1082px;top:393px;font-size:11px;color:#222">Użytkownicy: 33</div><svg class="a" style="left:1227px;top:421px" width="16" height="26" viewBox="0 0 16 26"><path d="M1 1v19l4.5-4.5 3.2 7.2 2.8-1.2-3.1-7H14z" fill="#fff" stroke="#222" stroke-width="1.2"/></svg><div class="a" style="left:120px;top:478px;font-size:13px;color:#222">Użytkownicy</div><div class="a" style="left:120px;top:497px;font-size:24px;color:#222">10 380</div><div class="a" style="left:300px;top:479px;width:1px;height:74px;background:#dcdcdc"></div><div class="a" style="left:311px;top:478px;font-size:13px;color:#222">Nowi użytkownicy</div><div class="a" style="left:311px;top:497px;font-size:24px;color:#222">9 762</div><div class="a" style="left:491px;top:479px;width:1px;height:74px;background:#dcdcdc"></div><div class="a" style="left:502px;top:478px;font-size:13px;color:#222">Sesje</div><div class="a" style="left:502px;top:497px;font-size:24px;color:#222">12 830</div><div class="a" style="left:682px;top:479px;width:1px;height:74px;background:#dcdcdc"></div><div class="a" style="left:693px;top:478px;font-size:13px;color:#222">Sesje na użytkownika</div><div class="a" style="left:693px;top:497px;font-size:24px;color:#222">1,24</div><div class="a" style="left:873px;top:479px;width:1px;height:74px;background:#dcdcdc"></div><div class="a" style="left:884px;top:478px;font-size:13px;color:#222">Odsłony</div><div class="a" style="left:884px;top:497px;font-size:24px;color:#222">29 633</div><div class="a" style="left:1064px;top:479px;width:1px;height:74px;background:#dcdcdc"></div><div class="a" style="left:1075px;top:478px;font-size:13px;color:#222">Strony/sesja</div><div class="a" style="left:1075px;top:497px;font-size:24px;color:#222">2,31</div><div class="a" style="left:1255px;top:479px;width:1px;height:74px;background:#dcdcdc"></div><div class="a" style="left:120px;top:578px;font-size:13px;color:#222">Śr. czas trwania sesji</div><div class="a" style="left:120px;top:597px;font-size:24px;color:#222">00:01:49</div><div class="a" style="left:300px;top:579px;width:1px;height:74px;background:#dcdcdc"></div><div class="a" style="left:311px;top:578px;font-size:13px;color:#222">Współczynnik odrzuceń</div><div class="a" style="left:311px;top:597px;font-size:24px;color:#222">64,72%</div><div class="a" style="left:491px;top:579px;width:1px;height:74px;background:#dcdcdc"></div><svg class="a" style="left:0;top:0" width="1707" height="700"><path d="M122.00 543.00 L122.66 543.00 L123.33 543.00 L123.99 541.69 L124.65 540.64 L125.31 539.50 L125.98 539.09 L126.64 540.90 L127.30 542.48 L127.96 543.00 L128.63 543.00 L129.29 541.98 L129.95 540.55 L130.62 539.61 L131.28 539.30 L131.94 539.85 L132.60 542.10 L133.27 543.00 L133.93 543.00 L134.59 541.63 L135.25 540.12 L135.92 539.39 L136.58 538.35 L137.24 540.10 L137.91 541.74 L138.57 543.00 L139.23 543.00 L139.89 541.97 L140.56 540.74 L141.22 539.40 L141.88 538.65 L142.55 539.21 L143.21 541.19 L143.87 542.76 L144.53 543.00 L145.20 541.72 L145.86 539.90 L146.52 539.24 L147.18 538.06 L147.85 539.20 L148.51 541.48 L149.17 543.00 L149.84 543.00 L150.50 540.71 L151.16 539.35 L151.82 538.68 L152.49 536.96 L153.15 539.96 L153.81 542.01 L154.47 543.00 L155.14 543.00 L155.80 541.32 L156.46 540.05 L157.13 539.86 L157.79 539.58 L158.45 541.08 L159.11 542.72 L159.78 543.00 L160.44 543.00 L161.10 541.74 L161.76 540.48 L162.43 539.50 L163.09 539.24 L163.75 539.83 L164.42 541.60 L165.08 543.00 L165.74 543.00 L166.40 541.99 L167.07 540.69 L167.73 539.49 L168.39 538.68 L169.05 540.48 L169.72 542.35 L170.38 543.00 L171.04 543.00 L171.71 541.49 L172.37 540.22 L173.03 538.97 L173.69 539.31 L174.36 540.10 L175.02 541.96 L175.68 543.00 L176.35 543.00 L177.01 541.73 L177.67 540.83 L178.33 539.36 L179.00 538.81 L179.66 538.40 L180.32 540.36 L180.98 542.15 L181.65 543.00 L182.31 540.89 L182.97 539.05 L183.64 538.61 L184.30 536.14 L184.96 539.20 L185.62 541.91 L186.29 543.00 L186.95 543.00 L187.61 541.46 L188.27 539.45 L188.94 538.58 L189.60 538.12 L190.26 538.27 L190.93 540.83 L191.59 542.73 L192.25 543.00 L192.91 541.35 L193.58 540.42 L194.24 539.20 L194.90 538.56 L195.56 540.00 L196.23 542.14 L196.89 543.00 L197.55 543.00 L198.22 541.02 L198.88 539.37 L199.54 539.02 L200.20 537.32 L200.87 539.13 L201.53 540.92 L202.19 542.93 L202.85 543.00 L203.52 541.40 L204.18 539.66 L204.84 538.48 L205.51 537.51 L206.17 540.33 L206.83 542.42 L207.49 543.00 L208.16 543.00 L208.82 541.44 L209.48 539.79 L210.15 538.49 L210.81 537.72 L211.47 538.48 L212.13 540.95 L212.80 542.81 L213.46 543.00 L214.12 541.83 L214.78 540.24 L215.45 539.37 L216.11 538.74 L216.77 538.51 L217.44 540.28 L218.10 542.30 L218.76 543.00 L219.42 541.31 L220.09 539.87 L220.75 538.56 L221.41 536.90 L222.07 538.51 L222.74 541.11 L223.40 543.00 L224.06 543.00 L224.73 541.77 L225.39 540.43 L226.05 539.56 L226.71 538.11 L227.38 537.81 L228.04 540.69 L228.70 542.58 L229.36 543.00 L230.03 541.76 L230.69 540.65 L231.35 539.19 L232.02 538.78 L232.68 538.97 L233.34 541.46 L234.00 543.00 L234.67 543.00 L235.33 541.93 L235.99 540.36 L236.65 538.46 L237.32 538.75 L237.98 540.51 L238.64 542.94 L239.31 543.00 L239.97 543.00 L240.63 541.78 L241.29 540.46 L241.96 539.61 L242.62 538.40 L243.28 539.91 L243.95 541.28 L244.61 542.90 L245.27 543.00 L245.93 541.64 L246.60 540.26 L247.26 539.61 L247.92 538.72 L248.58 539.47 L249.25 541.95 L249.91 543.00 L250.57 543.00 L251.24 541.71 L251.90 539.81 L252.56 538.63 L253.22 538.08 L253.89 539.79 L254.55 542.40 L255.21 543.00 L255.87 543.00 L256.54 541.67 L257.20 539.61 L257.86 537.99 L258.53 536.94 L259.19 540.34 L259.85 542.61 L260.51 543.00 L261.18 543.00 L261.84 541.81 L262.50 539.52 L263.16 538.55 L263.83 536.80 L264.49 537.94 L265.15 540.89 L265.82 542.63 L266.48 543.00 L267.14 541.33 L267.80 539.94 L268.47 538.89 L269.13 537.85 L269.79 539.75 L270.45 542.03 L271.12 543.00 L271.78 543.00 L272.44 541.57 L273.11 539.87 L273.77 538.27 L274.43 526.50 L275.09 540.55 L275.76 542.75 L276.42 543.00 L277.08 543.00 L277.75 541.13 L278.41 539.88 L279.07 538.86 L279.73 537.33 L280.40 537.81 L281.06 540.31 L281.72 542.48 L282.38 543.00 L283.05 541.59 L283.71 540.04 L284.37 539.24 L285.04 538.22 L285.70 538.81 L286.36 541.14 L287.02 543.00 L287.69 543.00 L288.35 541.26 L289.01 538.99 L289.67 538.13 L290.34 536.93 L291.00 534.75" fill="none" stroke="#058dc7" stroke-width="1.6" stroke-linejoin="round"/><path d="M313.00 543.00 L313.66 543.00 L314.33 543.00 L314.99 541.59 L315.65 540.24 L316.31 539.90 L316.98 538.88 L317.64 540.77 L318.30 542.53 L318.96 543.00 L319.63 543.00 L320.29 541.92 L320.95 540.73 L321.62 539.48 L322.28 538.98 L322.94 540.75 L323.60 542.04 L324.27 543.00 L324.93 543.00 L325.59 541.59 L326.25 540.33 L326.92 539.43 L327.58 538.96 L328.24 539.97 L328.91 541.91 L329.57 543.00 L330.23 543.00 L330.89 542.00 L331.56 540.53 L332.22 539.46 L332.88 538.76 L333.55 539.28 L334.21 541.74 L334.87 542.78 L335.53 543.00 L336.20 541.80 L336.86 539.73 L337.52 539.24 L338.18 537.98 L338.85 539.73 L339.51 541.68 L340.17 543.00 L340.84 543.00 L341.50 540.43 L342.16 539.10 L342.82 538.12 L343.49 537.38 L344.15 540.25 L344.81 542.16 L345.47 543.00 L346.14 543.00 L346.80 541.45 L347.46 540.75 L348.13 539.49 L348.79 539.55 L349.45 540.82 L350.11 542.71 L350.78 543.00 L351.44 543.00 L352.10 541.74 L352.76 540.63 L353.43 540.08 L354.09 539.06 L354.75 539.17 L355.42 541.54 L356.08 543.00 L356.74 543.00 L357.40 542.02 L358.07 540.34 L358.73 539.58 L359.39 538.06 L360.05 540.57 L360.72 542.47 L361.38 543.00 L362.04 543.00 L362.71 541.60 L363.37 540.17 L364.03 538.89 L364.69 539.11 L365.36 540.13 L366.02 542.00 L366.68 543.00 L367.35 543.00 L368.01 541.83 L368.67 540.19 L369.33 539.41 L370.00 538.46 L370.66 538.34 L371.32 540.42 L371.98 542.27 L372.65 543.00 L373.31 540.54 L373.97 538.87 L374.64 537.56 L375.30 536.53 L375.96 539.04 L376.62 541.91 L377.29 543.00 L377.95 543.00 L378.61 541.32 L379.27 539.69 L379.94 538.75 L380.60 537.59 L381.26 537.65 L381.93 540.20 L382.59 542.70 L383.25 543.00 L383.91 541.41 L384.58 539.93 L385.24 539.07 L385.90 538.16 L386.56 539.95 L387.23 542.14 L387.89 543.00 L388.55 543.00 L389.22 541.16 L389.88 539.52 L390.54 538.54 L391.20 537.17 L391.87 538.42 L392.53 541.12 L393.19 542.94 L393.85 543.00 L394.52 541.27 L395.18 539.42 L395.84 538.41 L396.51 537.45 L397.17 540.53 L397.83 542.41 L398.49 543.00 L399.16 543.00 L399.82 541.62 L400.48 540.12 L401.15 538.79 L401.81 538.07 L402.47 538.97 L403.13 540.76 L403.80 542.78 L404.46 543.00 L405.12 541.95 L405.78 540.62 L406.45 539.55 L407.11 538.74 L407.77 538.63 L408.44 540.45 L409.10 542.38 L409.76 543.00 L410.42 541.39 L411.09 539.10 L411.75 538.06 L412.41 536.88 L413.07 538.42 L413.74 541.16 L414.40 543.00 L415.06 543.00 L415.73 541.81 L416.39 540.93 L417.05 539.26 L417.71 537.19 L418.38 539.17 L419.04 540.73 L419.70 542.49 L420.36 543.00 L421.03 541.77 L421.69 540.70 L422.35 539.78 L423.02 538.63 L423.68 539.56 L424.34 541.67 L425.00 543.00 L425.67 543.00 L426.33 541.89 L426.99 540.30 L427.65 538.96 L428.32 538.48 L428.98 541.01 L429.64 542.94 L430.31 543.00 L430.97 543.00 L431.63 541.73 L432.29 540.72 L432.96 539.60 L433.62 538.95 L434.28 538.80 L434.95 541.13 L435.61 542.88 L436.27 543.00 L436.93 541.43 L437.60 540.43 L438.26 539.12 L438.92 538.58 L439.58 539.69 L440.25 542.07 L440.91 543.00 L441.57 543.00 L442.24 541.69 L442.90 540.01 L443.56 539.22 L444.22 538.85 L444.89 540.12 L445.55 542.39 L446.21 543.00 L446.87 543.00 L447.54 541.67 L448.20 539.28 L448.86 538.24 L449.53 537.39 L450.19 540.20 L450.85 542.57 L451.51 543.00 L452.18 543.00 L452.84 541.61 L453.50 539.99 L454.16 538.19 L454.83 537.15 L455.49 536.92 L456.15 540.09 L456.82 542.63 L457.48 543.00 L458.14 541.32 L458.80 539.71 L459.47 538.74 L460.13 537.90 L460.79 539.32 L461.45 542.10 L462.12 543.00 L462.78 543.00 L463.44 541.59 L464.11 539.66 L464.77 538.39 L465.43 526.50 L466.09 540.14 L466.76 542.81 L467.42 543.00 L468.08 543.00 L468.75 541.29 L469.41 540.16 L470.07 539.39 L470.73 538.12 L471.40 538.61 L472.06 540.55 L472.72 542.36 L473.38 543.00 L474.05 541.79 L474.71 540.34 L475.37 538.99 L476.04 537.26 L476.70 538.88 L477.36 540.99 L478.02 543.00 L478.69 543.00 L479.35 541.03 L480.01 539.52 L480.67 537.90 L481.34 537.45 L482.00 535.37" fill="none" stroke="#058dc7" stroke-width="1.6" stroke-linejoin="round"/><path d="M504.00 543.00 L504.66 543.00 L505.33 543.00 L505.99 541.50 L506.65 540.46 L507.31 539.58 L507.98 538.09 L508.64 540.60 L509.30 542.49 L509.96 543.00 L510.63 543.00 L511.29 541.90 L511.95 540.44 L512.62 539.86 L513.28 538.92 L513.94 540.08 L514.60 542.21 L515.27 543.00 L515.93 543.00 L516.59 541.64 L517.25 540.41 L517.92 539.54 L518.58 538.64 L519.24 540.34 L519.91 541.77 L520.57 543.00 L521.23 543.00 L521.89 542.05 L522.56 540.61 L523.22 540.08 L523.88 538.85 L524.55 540.05 L525.21 541.42 L525.87 542.76 L526.53 543.00 L527.20 541.66 L527.86 539.98 L528.52 538.98 L529.18 537.70 L529.85 538.87 L530.51 541.58 L531.17 543.00 L531.84 543.00 L532.50 540.93 L533.16 539.56 L533.82 538.08 L534.49 537.75 L535.15 539.58 L535.81 542.21 L536.47 543.00 L537.14 543.00 L537.80 541.73 L538.46 539.95 L539.13 540.17 L539.79 539.25 L540.45 541.15 L541.11 542.70 L541.78 543.00 L542.44 543.00 L543.10 541.72 L543.76 540.62 L544.43 539.96 L545.09 538.90 L545.75 539.75 L546.42 541.52 L547.08 543.00 L547.74 543.00 L548.40 542.18 L549.07 540.18 L549.73 539.18 L550.39 538.76 L551.05 540.42 L551.72 542.44 L552.38 543.00 L553.04 543.00 L553.71 541.50 L554.37 540.16 L555.03 539.15 L555.69 538.29 L556.36 540.30 L557.02 541.80 L557.68 543.00 L558.35 543.00 L559.01 541.69 L559.67 540.33 L560.33 539.19 L561.00 538.53 L561.66 538.26 L562.32 540.25 L562.98 542.17 L563.65 543.00 L564.31 540.95 L564.97 538.57 L565.64 537.65 L566.30 537.25 L566.96 538.07 L567.62 541.89 L568.29 543.00 L568.95 543.00 L569.61 541.37 L570.27 540.13 L570.94 539.17 L571.60 538.41 L572.26 538.36 L572.93 540.40 L573.59 542.74 L574.25 543.00 L574.91 541.36 L575.58 540.09 L576.24 538.83 L576.90 537.78 L577.56 539.85 L578.23 542.19 L578.89 543.00 L579.55 543.00 L580.22 541.09 L580.88 539.31 L581.54 538.47 L582.20 537.66 L582.87 538.59 L583.53 541.04 L584.19 542.94 L584.85 543.00 L585.52 541.46 L586.18 539.82 L586.84 539.06 L587.51 537.37 L588.17 540.14 L588.83 542.51 L589.49 543.00 L590.16 543.00 L590.82 541.34 L591.48 540.13 L592.15 538.99 L592.81 538.12 L593.47 538.49 L594.13 541.06 L594.80 542.78 L595.46 543.00 L596.12 541.84 L596.78 540.44 L597.45 539.47 L598.11 539.07 L598.77 538.86 L599.44 540.65 L600.10 542.34 L600.76 543.00 L601.42 541.40 L602.09 539.34 L602.75 537.73 L603.41 537.06 L604.07 538.67 L604.74 541.30 L605.40 543.00 L606.06 543.00 L606.73 541.97 L607.39 540.23 L608.05 539.36 L608.71 538.58 L609.38 538.31 L610.04 540.60 L610.70 542.56 L611.36 543.00 L612.03 541.84 L612.69 540.57 L613.35 539.45 L614.02 538.33 L614.68 539.87 L615.34 541.51 L616.00 543.00 L616.67 543.00 L617.33 542.01 L617.99 540.14 L618.65 539.32 L619.32 538.23 L619.98 540.78 L620.64 542.94 L621.31 543.00 L621.97 543.00 L622.63 541.72 L623.29 540.68 L623.96 539.42 L624.62 538.59 L625.28 539.29 L625.95 540.86 L626.61 542.90 L627.27 543.00 L627.93 541.65 L628.60 540.69 L629.26 538.97 L629.92 538.25 L630.58 539.73 L631.25 541.99 L631.91 543.00 L632.57 543.00 L633.24 541.84 L633.90 540.14 L634.56 538.63 L635.22 537.93 L635.89 539.97 L636.55 542.39 L637.21 543.00 L637.87 543.00 L638.54 541.69 L639.20 539.34 L639.86 538.63 L640.53 536.88 L641.19 540.52 L641.85 542.56 L642.51 543.00 L643.18 543.00 L643.84 541.61 L644.50 539.63 L645.16 538.14 L645.83 537.60 L646.49 537.95 L647.15 540.70 L647.82 542.60 L648.48 543.00 L649.14 541.59 L649.80 540.07 L650.47 538.35 L651.13 538.76 L651.79 539.58 L652.45 542.07 L653.12 543.00 L653.78 543.00 L654.44 541.52 L655.11 539.54 L655.77 537.96 L656.43 526.50 L657.09 540.52 L657.76 542.78 L658.42 543.00 L659.08 543.00 L659.75 541.46 L660.41 539.74 L661.07 538.83 L661.73 538.10 L662.40 537.69 L663.06 540.61 L663.72 542.37 L664.38 543.00 L665.05 541.72 L665.71 539.97 L666.37 538.87 L667.04 537.85 L667.70 538.61 L668.36 540.96 L669.02 543.00 L669.69 543.00 L670.35 541.04 L671.01 539.39 L671.67 537.60 L672.34 537.20 L673.00 535.08" fill="none" stroke="#058dc7" stroke-width="1.6" stroke-linejoin="round"/><path d="M887.00 543.00 L887.65 543.00 L888.31 543.00 L888.96 541.81 L889.62 540.68 L890.27 539.99 L890.93 539.01 L891.58 541.16 L892.24 542.57 L892.89 543.00 L893.55 543.00 L894.20 542.10 L894.86 540.93 L895.51 540.07 L896.17 539.35 L896.82 540.03 L897.48 542.22 L898.13 543.00 L898.79 543.00 L899.44 541.90 L900.10 540.90 L900.75 539.73 L901.41 539.45 L902.06 540.90 L902.72 541.94 L903.37 543.00 L904.03 543.00 L904.68 542.21 L905.34 541.05 L905.99 540.11 L906.65 539.52 L907.30 540.00 L907.96 541.30 L908.61 542.83 L909.27 543.00 L909.92 541.97 L910.58 540.34 L911.23 539.76 L911.89 538.26 L912.54 540.04 L913.20 542.00 L913.85 543.00 L914.51 543.00 L915.16 541.28 L915.82 539.78 L916.47 538.65 L917.13 538.29 L917.78 540.44 L918.44 542.14 L919.09 543.00 L919.75 543.00 L920.40 541.60 L921.05 540.95 L921.71 540.04 L922.36 539.64 L923.02 541.40 L923.67 542.79 L924.33 543.00 L924.98 543.00 L925.64 541.92 L926.29 541.16 L926.95 540.04 L927.60 539.90 L928.26 539.74 L928.91 541.72 L929.57 543.00 L930.22 543.00 L930.88 542.14 L931.53 540.89 L932.19 540.37 L932.84 539.30 L933.50 540.75 L934.15 542.50 L934.81 543.00 L935.46 543.00 L936.12 541.68 L936.77 540.21 L937.43 540.14 L938.08 539.10 L938.74 541.07 L939.39 542.09 L940.05 543.00 L940.70 543.00 L941.36 541.93 L942.01 541.12 L942.67 539.60 L943.32 539.62 L943.98 539.41 L944.63 540.80 L945.29 542.33 L945.94 543.00 L946.60 541.21 L947.25 540.29 L947.91 538.13 L948.56 537.82 L949.22 539.50 L949.87 542.08 L950.53 543.00 L951.18 543.00 L951.84 541.77 L952.49 540.46 L953.15 539.39 L953.80 538.37 L954.45 539.01 L955.11 540.99 L955.76 542.77 L956.42 543.00 L957.07 541.68 L957.73 540.64 L958.38 539.88 L959.04 538.68 L959.69 540.28 L960.35 542.32 L961.00 543.00 L961.66 543.00 L962.31 541.39 L962.97 540.20 L963.62 539.58 L964.28 538.05 L964.93 539.27 L965.59 541.25 L966.24 542.94 L966.90 543.00 L967.55 541.60 L968.21 540.25 L968.86 538.61 L969.52 538.23 L970.17 540.82 L970.83 542.53 L971.48 543.00 L972.14 543.00 L972.79 541.66 L973.45 540.41 L974.10 538.97 L974.76 538.67 L975.41 539.36 L976.07 541.10 L976.72 542.83 L977.38 543.00 L978.03 542.11 L978.69 540.67 L979.34 540.21 L980.00 539.16 L980.65 539.81 L981.31 541.07 L981.96 542.47 L982.62 543.00 L983.27 541.36 L983.93 539.61 L984.58 539.37 L985.24 538.29 L985.89 538.89 L986.55 541.49 L987.20 543.00 L987.85 543.00 L988.51 542.15 L989.16 540.91 L989.82 540.16 L990.47 539.16 L991.13 538.80 L991.78 541.07 L992.44 542.62 L993.09 543.00 L993.75 542.10 L994.40 540.89 L995.06 540.08 L995.71 539.18 L996.37 540.03 L997.02 541.65 L997.68 543.00 L998.33 543.00 L998.99 542.06 L999.64 540.83 L1000.30 539.96 L1000.95 539.21 L1001.61 541.56 L1002.26 542.95 L1002.92 543.00 L1003.57 543.00 L1004.23 542.00 L1004.88 540.86 L1005.54 540.21 L1006.19 539.29 L1006.85 540.25 L1007.50 541.39 L1008.16 542.92 L1008.81 543.00 L1009.47 541.70 L1010.12 540.74 L1010.78 540.09 L1011.43 538.83 L1012.09 540.45 L1012.74 542.24 L1013.40 543.00 L1014.05 543.00 L1014.71 541.94 L1015.36 540.76 L1016.02 539.78 L1016.67 538.48 L1017.33 540.75 L1017.98 542.43 L1018.64 543.00 L1019.29 543.00 L1019.95 541.99 L1020.60 539.81 L1021.25 539.05 L1021.91 538.50 L1022.56 540.82 L1023.22 542.69 L1023.87 543.00 L1024.53 543.00 L1025.18 541.93 L1025.84 540.25 L1026.49 532.15 L1027.15 538.09 L1027.80 538.44 L1028.46 540.52 L1029.11 542.68 L1029.77 543.00 L1030.42 541.85 L1031.08 540.91 L1031.73 532.51 L1032.39 538.88 L1033.04 540.29 L1033.70 542.17 L1034.35 543.00 L1035.01 543.00 L1035.66 541.54 L1036.32 540.64 L1036.97 539.02 L1037.63 526.50 L1038.28 540.47 L1038.94 542.81 L1039.59 543.00 L1040.25 543.00 L1040.90 541.55 L1041.56 540.87 L1042.21 533.45 L1042.87 538.88 L1043.52 539.00 L1044.18 540.92 L1044.83 542.45 L1045.49 543.00 L1046.14 541.91 L1046.80 540.65 L1047.45 539.60 L1048.11 538.78 L1048.76 538.87 L1049.42 541.65 L1050.07 543.00 L1050.73 543.00 L1051.38 541.46 L1052.04 530.53 L1052.69 539.19 L1053.35 538.17 L1054.00 535.98" fill="none" stroke="#058dc7" stroke-width="1.6" stroke-linejoin="round"/><path d="M695.50 535.00 L696.34 530.31 L697.19 530.26 L698.03 542.29 L698.88 530.31 L699.72 542.80 L700.57 530.88 L701.41 530.53 L702.25 530.15 L703.10 542.30 L703.94 530.18 L704.79 530.81 L705.63 530.52 L706.47 530.70 L707.32 530.46 L708.16 542.39 L709.01 530.89 L709.85 530.73 L710.70 535.92 L711.54 530.17 L712.38 542.08 L713.23 536.64 L714.07 530.26 L714.92 530.79 L715.76 530.41 L716.61 530.80 L717.45 530.90 L718.29 530.20 L719.14 530.73 L719.98 530.73 L720.83 536.51 L721.67 530.20 L722.52 530.67 L723.36 530.13 L724.20 530.47 L725.05 530.36 L725.89 530.74 L726.74 542.84 L727.58 530.35 L728.42 530.13 L729.27 536.43 L730.11 530.66 L730.96 530.61 L731.80 530.77 L732.65 530.78 L733.49 530.85 L734.33 530.66 L735.18 530.42 L736.02 530.90 L736.87 526.70 L737.71 530.63 L738.56 530.65 L739.40 530.25 L740.24 530.52 L741.09 530.65 L741.93 530.52 L742.78 529.00 L743.62 530.85 L744.46 530.12 L745.31 530.88 L746.15 527.50 L747.00 530.22 L747.84 530.89 L748.69 530.27 L749.53 530.61 L750.37 542.20 L751.22 530.89 L752.06 530.86 L752.91 530.76 L753.75 530.14 L754.60 530.74 L755.44 535.53 L756.28 530.16 L757.13 530.15 L757.97 530.62 L758.82 530.62 L759.66 530.48 L760.51 530.28 L761.35 536.10 L762.19 530.30 L763.04 530.26 L763.88 530.21 L764.73 530.87 L765.57 530.14 L766.41 530.83 L767.26 530.63 L768.10 530.41 L768.95 530.17 L769.79 542.62 L770.64 530.16 L771.48 530.46 L772.32 530.65 L773.17 530.65 L774.01 541.83 L774.86 530.84 L775.70 530.78 L776.55 530.35 L777.39 530.10 L778.23 530.77 L779.08 530.86 L779.92 530.11 L780.77 530.47 L781.61 530.58 L782.45 530.71 L783.30 530.42 L784.14 530.24 L784.99 535.91 L785.83 530.56 L786.68 530.86 L787.52 530.17 L788.36 530.87 L789.21 530.51 L790.05 530.23 L790.90 530.80 L791.74 530.31 L792.59 530.14 L793.43 530.40 L794.27 530.27 L795.12 530.81 L795.96 530.55 L796.81 537.42 L797.65 530.22 L798.49 530.66 L799.34 530.54 L800.18 541.92 L801.03 530.22 L801.87 530.12 L802.72 530.54 L803.56 535.89 L804.40 530.32 L805.25 530.52 L806.09 530.67 L806.94 530.58 L807.78 530.78 L808.63 530.60 L809.47 530.11 L810.31 530.13 L811.16 530.40 L812.00 530.50 L812.85 530.63 L813.69 530.83 L814.54 537.73 L815.38 530.27 L816.22 537.86 L817.07 530.61 L817.91 530.27 L818.76 530.28 L819.60 530.34 L820.44 530.37 L821.29 530.29 L822.13 530.61 L822.98 530.34 L823.82 530.68 L824.67 530.51 L825.51 536.26 L826.35 530.35 L827.20 530.66 L828.04 530.14 L828.89 530.38 L829.73 530.44 L830.58 530.89 L831.42 530.46 L832.26 530.70 L833.11 530.36 L833.95 530.53 L834.80 530.25 L835.64 530.38 L836.48 530.26 L837.33 530.62 L838.17 530.38 L839.02 530.31 L839.86 530.24 L840.71 530.62 L841.55 536.33 L842.39 537.69 L843.24 530.35 L844.08 528.50 L844.93 530.13 L845.77 530.49 L846.62 530.48 L847.46 530.77 L848.30 541.91 L849.15 537.62 L849.99 530.52 L850.84 530.35 L851.68 530.32 L852.53 530.32 L853.37 530.76 L854.21 530.28 L855.06 530.44 L855.90 530.37 L856.75 530.56 L857.59 530.40 L858.43 530.28 L859.28 530.39 L860.12 530.32 L860.97 530.88 L861.81 530.77 L862.66 530.55 L863.50 530.38 L863.5 544.0 L695.5 544.0 Z" fill="#e6f3fa"/><path d="M695.50 535.00 L696.34 530.31 L697.19 530.26 L698.03 542.29 L698.88 530.31 L699.72 542.80 L700.57 530.88 L701.41 530.53 L702.25 530.15 L703.10 542.30 L703.94 530.18 L704.79 530.81 L705.63 530.52 L706.47 530.70 L707.32 530.46 L708.16 542.39 L709.01 530.89 L709.85 530.73 L710.70 535.92 L711.54 530.17 L712.38 542.08 L713.23 536.64 L714.07 530.26 L714.92 530.79 L715.76 530.41 L716.61 530.80 L717.45 530.90 L718.29 530.20 L719.14 530.73 L719.98 530.73 L720.83 536.51 L721.67 530.20 L722.52 530.67 L723.36 530.13 L724.20 530.47 L725.05 530.36 L725.89 530.74 L726.74 542.84 L727.58 530.35 L728.42 530.13 L729.27 536.43 L730.11 530.66 L730.96 530.61 L731.80 530.77 L732.65 530.78 L733.49 530.85 L734.33 530.66 L735.18 530.42 L736.02 530.90 L736.87 526.70 L737.71 530.63 L738.56 530.65 L739.40 530.25 L740.24 530.52 L741.09 530.65 L741.93 530.52 L742.78 529.00 L743.62 530.85 L744.46 530.12 L745.31 530.88 L746.15 527.50 L747.00 530.22 L747.84 530.89 L748.69 530.27 L749.53 530.61 L750.37 542.20 L751.22 530.89 L752.06 530.86 L752.91 530.76 L753.75 530.14 L754.60 530.74 L755.44 535.53 L756.28 530.16 L757.13 530.15 L757.97 530.62 L758.82 530.62 L759.66 530.48 L760.51 530.28 L761.35 536.10 L762.19 530.30 L763.04 530.26 L763.88 530.21 L764.73 530.87 L765.57 530.14 L766.41 530.83 L767.26 530.63 L768.10 530.41 L768.95 530.17 L769.79 542.62 L770.64 530.16 L771.48 530.46 L772.32 530.65 L773.17 530.65 L774.01 541.83 L774.86 530.84 L775.70 530.78 L776.55 530.35 L777.39 530.10 L778.23 530.77 L779.08 530.86 L779.92 530.11 L780.77 530.47 L781.61 530.58 L782.45 530.71 L783.30 530.42 L784.14 530.24 L784.99 535.91 L785.83 530.56 L786.68 530.86 L787.52 530.17 L788.36 530.87 L789.21 530.51 L790.05 530.23 L790.90 530.80 L791.74 530.31 L792.59 530.14 L793.43 530.40 L794.27 530.27 L795.12 530.81 L795.96 530.55 L796.81 537.42 L797.65 530.22 L798.49 530.66 L799.34 530.54 L800.18 541.92 L801.03 530.22 L801.87 530.12 L802.72 530.54 L803.56 535.89 L804.40 530.32 L805.25 530.52 L806.09 530.67 L806.94 530.58 L807.78 530.78 L808.63 530.60 L809.47 530.11 L810.31 530.13 L811.16 530.40 L812.00 530.50 L812.85 530.63 L813.69 530.83 L814.54 537.73 L815.38 530.27 L816.22 537.86 L817.07 530.61 L817.91 530.27 L818.76 530.28 L819.60 530.34 L820.44 530.37 L821.29 530.29 L822.13 530.61 L822.98 530.34 L823.82 530.68 L824.67 530.51 L825.51 536.26 L826.35 530.35 L827.20 530.66 L828.04 530.14 L828.89 530.38 L829.73 530.44 L830.58 530.89 L831.42 530.46 L832.26 530.70 L833.11 530.36 L833.95 530.53 L834.80 530.25 L835.64 530.38 L836.48 530.26 L837.33 530.62 L838.17 530.38 L839.02 530.31 L839.86 530.24 L840.71 530.62 L841.55 536.33 L842.39 537.69 L843.24 530.35 L844.08 528.50 L844.93 530.13 L845.77 530.49 L846.62 530.48 L847.46 530.77 L848.30 541.91 L849.15 537.62 L849.99 530.52 L850.84 530.35 L851.68 530.32 L852.53 530.32 L853.37 530.76 L854.21 530.28 L855.06 530.44 L855.90 530.37 L856.75 530.56 L857.59 530.40 L858.43 530.28 L859.28 530.39 L860.12 530.32 L860.97 530.88 L861.81 530.77 L862.66 530.55 L863.50 530.38" fill="none" stroke="#058dc7" stroke-width="1.8" stroke-linejoin="round"/><path d="M1077.00 538.12 L1077.85 539.04 L1078.71 540.50 L1079.56 539.09 L1080.42 539.38 L1081.27 539.68 L1082.13 538.31 L1082.98 538.89 L1083.83 539.92 L1084.69 538.08 L1085.54 538.09 L1086.40 537.97 L1087.25 540.22 L1088.11 538.09 L1088.96 540.22 L1089.81 538.60 L1090.67 537.65 L1091.52 539.90 L1092.38 539.42 L1093.23 537.77 L1094.09 538.57 L1094.94 538.08 L1095.79 540.41 L1096.65 538.69 L1097.50 533.86 L1098.36 534.51 L1099.21 539.56 L1100.07 535.87 L1100.92 537.90 L1101.77 540.46 L1102.63 540.45 L1103.48 537.79 L1104.34 539.58 L1105.19 533.50 L1106.05 540.34 L1106.90 538.26 L1107.75 537.56 L1108.61 537.56 L1109.46 538.49 L1110.32 539.16 L1111.17 538.11 L1112.03 539.09 L1112.88 534.26 L1113.73 539.70 L1114.59 538.15 L1115.44 534.73 L1116.30 539.42 L1117.15 539.15 L1118.01 539.74 L1118.86 537.86 L1119.71 539.70 L1120.57 535.37 L1121.42 539.58 L1122.28 539.53 L1123.13 537.59 L1123.98 539.37 L1124.84 539.54 L1125.69 539.04 L1126.55 537.69 L1127.40 540.48 L1128.26 534.18 L1129.11 540.16 L1129.96 539.41 L1130.82 535.92 L1131.67 532.50 L1132.53 539.23 L1133.38 538.06 L1134.24 535.41 L1135.09 540.07 L1135.94 534.62 L1136.80 534.56 L1137.65 539.11 L1138.51 538.61 L1139.36 540.12 L1140.22 540.25 L1141.07 537.77 L1141.92 531.50 L1142.78 538.42 L1143.63 540.09 L1144.49 537.77 L1145.34 538.16 L1146.20 539.67 L1147.05 532.00 L1147.90 537.57 L1148.76 533.93 L1149.61 539.66 L1150.47 539.21 L1151.32 534.05 L1152.18 538.58 L1153.03 540.40 L1153.88 533.52 L1154.74 538.20 L1155.59 538.40 L1156.45 540.27 L1157.30 534.50 L1158.16 539.11 L1159.01 534.94 L1159.86 540.41 L1160.72 540.05 L1161.57 540.05 L1162.43 539.34 L1163.28 539.84 L1164.14 537.77 L1164.99 540.01 L1165.84 539.78 L1166.70 538.14 L1167.55 539.94 L1168.41 539.36 L1169.26 539.31 L1170.12 538.85 L1170.97 538.35 L1171.82 538.08 L1172.68 538.50 L1173.53 540.01 L1174.39 536.38 L1175.24 534.37 L1176.10 540.20 L1176.95 540.40 L1177.80 538.14 L1178.66 538.80 L1179.51 539.62 L1180.37 538.33 L1181.22 539.99 L1182.08 533.55 L1182.93 540.35 L1183.78 538.25 L1184.64 538.31 L1185.49 539.64 L1186.35 539.89 L1187.20 538.16 L1188.06 539.86 L1188.91 539.74 L1189.76 538.27 L1190.62 538.38 L1191.47 534.71 L1192.33 540.40 L1193.18 540.15 L1194.04 540.42 L1194.89 537.66 L1195.74 536.08 L1196.60 536.49 L1197.45 534.73 L1198.31 535.24 L1199.16 539.95 L1200.02 539.35 L1200.87 538.81 L1201.72 539.06 L1202.58 540.09 L1203.43 539.92 L1204.29 538.07 L1205.14 537.66 L1205.99 534.72 L1206.85 535.00 L1207.70 538.91 L1208.56 538.07 L1209.41 537.97 L1210.27 540.04 L1211.12 537.89 L1211.97 539.49 L1212.83 540.10 L1213.68 537.93 L1214.54 540.48 L1215.39 540.25 L1216.25 538.20 L1217.10 532.50 L1217.95 540.12 L1218.81 537.99 L1219.66 537.64 L1220.52 538.17 L1221.37 539.41 L1222.23 537.97 L1223.08 537.90 L1223.93 531.00 L1224.79 540.17 L1225.64 538.34 L1226.50 534.44 L1227.35 533.56 L1228.21 535.45 L1229.06 540.03 L1229.91 537.75 L1230.77 526.00 L1231.62 537.92 L1232.48 534.66 L1233.33 539.13 L1234.19 538.78 L1235.04 537.59 L1235.89 537.76 L1236.75 540.50 L1237.60 540.41 L1238.46 535.68 L1239.31 538.34 L1240.17 533.99 L1241.02 539.38 L1241.87 540.06 L1242.73 531.50 L1243.58 540.44 L1244.44 535.16 L1245.29 540.46 L1246.15 537.59 L1247.00 536.14" fill="none" stroke="#058dc7" stroke-width="1.8" stroke-linejoin="round"/><path d="M122.50 641.50 L123.26 633.00 L124.03 635.50 L124.79 641.63 L125.56 640.96 L126.32 637.34 L127.09 636.46 L127.85 641.48 L128.62 639.76 L129.38 641.89 L130.15 637.76 L130.91 641.18 L131.68 641.29 L132.44 640.86 L133.21 639.77 L133.97 637.11 L134.74 637.11 L135.50 640.64 L136.27 639.82 L137.03 641.24 L137.80 641.84 L138.56 641.94 L139.33 640.30 L140.09 639.92 L140.86 637.94 L141.62 637.19 L142.39 640.83 L143.15 636.48 L143.92 635.00 L144.68 641.06 L145.45 639.95 L146.21 641.73 L146.97 641.75 L147.74 634.97 L148.50 637.47 L149.27 638.13 L150.03 641.57 L150.80 641.00 L151.56 640.61 L152.33 638.79 L153.09 640.79 L153.86 626.30 L154.62 640.29 L155.39 638.72 L156.15 641.16 L156.92 640.19 L157.68 637.33 L158.45 641.63 L159.21 642.11 L159.98 640.15 L160.74 637.06 L161.51 637.79 L162.27 640.86 L163.04 637.84 L163.80 638.12 L164.57 640.24 L165.33 640.93 L166.10 636.10 L166.86 637.55 L167.63 640.29 L168.39 642.14 L169.16 637.06 L169.92 640.16 L170.68 636.04 L171.45 640.78 L172.21 637.77 L172.98 639.75 L173.74 639.70 L174.51 641.60 L175.27 640.72 L176.04 641.20 L176.80 639.90 L177.57 640.51 L178.33 640.09 L179.10 638.26 L179.86 639.61 L180.63 641.36 L181.39 640.54 L182.16 640.35 L182.92 640.23 L183.69 640.57 L184.45 641.05 L185.22 640.77 L185.98 637.53 L186.75 641.47 L187.51 641.88 L188.28 641.46 L189.04 640.03 L189.81 641.45 L190.57 641.09 L191.34 639.59 L192.10 634.87 L192.87 640.59 L193.63 641.21 L194.39 640.06 L195.16 640.43 L195.92 639.52 L196.69 637.78 L197.45 638.07 L198.22 639.85 L198.98 637.79 L199.75 639.86 L200.51 637.16 L201.28 639.88 L202.04 641.21 L202.81 640.00 L203.57 640.58 L204.34 641.40 L205.10 641.32 L205.87 641.89 L206.63 638.49 L207.40 641.15 L208.16 638.55 L208.93 637.50 L209.69 637.89 L210.46 640.21 L211.22 640.69 L211.99 639.82 L212.75 640.91 L213.52 639.67 L214.28 638.35 L215.05 637.48 L215.81 642.04 L216.58 640.62 L217.34 641.08 L218.11 640.64 L218.87 639.71 L219.63 639.54 L220.40 641.21 L221.16 640.77 L221.93 640.36 L222.69 641.85 L223.46 640.85 L224.22 640.76 L224.99 635.45 L225.75 640.13 L226.52 638.21 L227.28 642.11 L228.05 639.65 L228.81 640.31 L229.58 641.81 L230.34 637.84 L231.11 641.86 L231.87 641.05 L232.64 637.00 L233.40 642.09 L234.17 640.43 L234.93 641.23 L235.70 640.44 L236.46 635.77 L237.23 641.27 L237.99 640.02 L238.76 638.72 L239.52 640.28 L240.29 638.53 L241.05 641.23 L241.82 640.68 L242.58 640.45 L243.34 640.09 L244.11 640.62 L244.87 639.93 L245.64 639.88 L246.40 640.50 L247.17 640.43 L247.93 640.64 L248.70 641.22 L249.46 640.97 L250.23 641.16 L250.99 638.71 L251.76 637.41 L252.52 635.23 L253.29 641.52 L254.05 638.93 L254.82 635.87 L255.58 639.56 L256.35 640.21 L257.11 637.37 L257.88 641.31 L258.64 641.08 L259.41 642.20 L260.17 641.94 L260.94 640.90 L261.70 640.26 L262.47 639.75 L263.23 637.58 L264.00 639.63 L264.76 641.27 L265.53 640.43 L266.29 638.94 L267.05 642.03 L267.82 635.71 L268.58 640.33 L269.35 640.79 L270.11 635.11 L270.88 637.39 L271.64 640.43 L272.41 640.09 L273.17 640.27 L273.94 638.31 L274.70 640.83 L275.47 640.35 L276.23 639.85 L277.00 640.53 L277.76 634.91 L278.53 638.52 L279.29 641.60 L280.06 635.12 L280.82 640.68 L281.59 641.00 L282.35 635.31 L283.12 639.93 L283.88 641.12 L284.65 641.88 L285.41 639.89 L286.18 639.50 L286.94 629.00 L287.71 639.81 L288.47 641.66 L289.24 639.65 L290.00 640.85" fill="none" stroke="#058dc7" stroke-width="1.8" stroke-linejoin="round"/><path d="M314.00 637.00 L314.76 634.00 L315.53 631.55 L316.29 629.63 L317.05 630.55 L317.81 636.68 L318.58 632.49 L319.34 632.94 L320.10 632.87 L320.86 631.72 L321.63 642.35 L322.39 629.17 L323.15 632.80 L323.91 641.44 L324.68 632.61 L325.44 635.91 L326.20 635.55 L326.96 631.44 L327.73 630.58 L328.49 640.68 L329.25 628.94 L330.01 630.28 L330.78 631.60 L331.54 641.91 L332.30 631.60 L333.06 629.64 L333.83 633.08 L334.59 631.31 L335.35 632.22 L336.11 631.49 L336.88 632.75 L337.64 632.42 L338.40 633.04 L339.16 631.69 L339.93 632.97 L340.69 632.28 L341.45 631.10 L342.21 631.08 L342.98 632.46 L343.74 635.75 L344.50 641.83 L345.26 629.81 L346.03 642.40 L346.79 630.48 L347.55 628.81 L348.32 633.09 L349.08 629.74 L349.84 630.39 L350.60 630.88 L351.37 630.44 L352.13 629.03 L352.89 632.49 L353.65 629.36 L354.42 629.05 L355.18 630.14 L355.94 632.26 L356.70 632.08 L357.47 640.28 L358.23 631.35 L358.99 631.28 L359.75 630.74 L360.52 629.15 L361.28 629.85 L362.04 630.61 L362.80 629.73 L363.57 631.67 L364.33 629.96 L365.09 633.12 L365.85 629.22 L366.62 629.25 L367.38 630.85 L368.14 641.62 L368.90 631.83 L369.67 630.17 L370.43 641.16 L371.19 630.12 L371.95 632.12 L372.72 631.78 L373.48 641.72 L374.24 630.14 L375.00 630.30 L375.77 641.28 L376.53 636.00 L377.29 631.70 L378.05 631.76 L378.82 633.17 L379.58 636.70 L380.34 632.23 L381.11 631.00 L381.87 632.49 L382.63 630.53 L383.39 632.10 L384.16 629.44 L384.92 632.20 L385.68 629.85 L386.44 630.24 L387.21 628.92 L387.97 630.20 L388.73 629.98 L389.49 631.00 L390.26 641.94 L391.02 630.81 L391.78 633.00 L392.54 631.94 L393.31 630.57 L394.07 629.36 L394.83 640.90 L395.59 629.49 L396.36 629.75 L397.12 630.48 L397.88 631.41 L398.64 631.51 L399.41 637.38 L400.17 632.08 L400.93 640.41 L401.69 629.36 L402.46 631.62 L403.22 640.34 L403.98 635.36 L404.74 633.09 L405.51 637.51 L406.27 630.05 L407.03 637.06 L407.79 629.41 L408.56 632.75 L409.32 630.84 L410.08 630.88 L410.84 629.68 L411.61 630.40 L412.37 630.41 L413.13 631.37 L413.89 630.05 L414.66 629.13 L415.42 629.44 L416.18 628.99 L416.95 631.32 L417.71 630.53 L418.47 642.34 L419.23 642.36 L420.00 633.16 L420.76 632.70 L421.52 630.49 L422.28 628.97 L423.05 641.93 L423.81 629.12 L424.57 632.29 L425.33 631.34 L426.10 631.81 L426.86 632.82 L427.62 629.01 L428.38 629.83 L429.15 631.61 L429.91 629.14 L430.67 641.93 L431.43 631.08 L432.20 629.57 L432.96 631.71 L433.72 629.41 L434.48 636.13 L435.25 630.84 L436.01 632.19 L436.77 641.15 L437.53 629.01 L438.30 632.09 L439.06 632.75 L439.82 636.36 L440.58 630.58 L441.35 631.54 L442.11 631.64 L442.87 631.75 L443.63 636.80 L444.40 632.30 L445.16 631.58 L445.92 629.07 L446.68 631.74 L447.45 631.45 L448.21 640.82 L448.97 632.75 L449.74 629.64 L450.50 636.69 L451.26 631.96 L452.02 636.09 L452.79 630.40 L453.55 631.09 L454.31 631.18 L455.07 631.48 L455.84 631.62 L456.60 629.89 L457.36 630.89 L458.12 630.99 L458.89 630.49 L459.65 631.64 L460.41 633.09 L461.17 629.72 L461.94 628.94 L462.70 632.53 L463.46 631.35 L464.22 632.06 L464.99 642.21 L465.75 637.63 L466.51 629.54 L467.27 631.04 L468.04 637.32 L468.80 629.41 L469.56 629.10 L470.32 635.27 L471.09 629.83 L471.85 629.72 L472.61 630.85 L473.37 632.72 L474.14 632.38 L474.90 629.51 L475.66 641.26 L476.42 631.62 L477.19 632.86 L477.95 630.90 L478.71 629.49 L479.47 630.78 L480.24 629.47 L481.00 640.51 L481.0 644.0 L314.0 644.0 Z" fill="#e6f3fa"/><path d="M314.00 637.00 L314.76 634.00 L315.53 631.55 L316.29 629.63 L317.05 630.55 L317.81 636.68 L318.58 632.49 L319.34 632.94 L320.10 632.87 L320.86 631.72 L321.63 642.35 L322.39 629.17 L323.15 632.80 L323.91 641.44 L324.68 632.61 L325.44 635.91 L326.20 635.55 L326.96 631.44 L327.73 630.58 L328.49 640.68 L329.25 628.94 L330.01 630.28 L330.78 631.60 L331.54 641.91 L332.30 631.60 L333.06 629.64 L333.83 633.08 L334.59 631.31 L335.35 632.22 L336.11 631.49 L336.88 632.75 L337.64 632.42 L338.40 633.04 L339.16 631.69 L339.93 632.97 L340.69 632.28 L341.45 631.10 L342.21 631.08 L342.98 632.46 L343.74 635.75 L344.50 641.83 L345.26 629.81 L346.03 642.40 L346.79 630.48 L347.55 628.81 L348.32 633.09 L349.08 629.74 L349.84 630.39 L350.60 630.88 L351.37 630.44 L352.13 629.03 L352.89 632.49 L353.65 629.36 L354.42 629.05 L355.18 630.14 L355.94 632.26 L356.70 632.08 L357.47 640.28 L358.23 631.35 L358.99 631.28 L359.75 630.74 L360.52 629.15 L361.28 629.85 L362.04 630.61 L362.80 629.73 L363.57 631.67 L364.33 629.96 L365.09 633.12 L365.85 629.22 L366.62 629.25 L367.38 630.85 L368.14 641.62 L368.90 631.83 L369.67 630.17 L370.43 641.16 L371.19 630.12 L371.95 632.12 L372.72 631.78 L373.48 641.72 L374.24 630.14 L375.00 630.30 L375.77 641.28 L376.53 636.00 L377.29 631.70 L378.05 631.76 L378.82 633.17 L379.58 636.70 L380.34 632.23 L381.11 631.00 L381.87 632.49 L382.63 630.53 L383.39 632.10 L384.16 629.44 L384.92 632.20 L385.68 629.85 L386.44 630.24 L387.21 628.92 L387.97 630.20 L388.73 629.98 L389.49 631.00 L390.26 641.94 L391.02 630.81 L391.78 633.00 L392.54 631.94 L393.31 630.57 L394.07 629.36 L394.83 640.90 L395.59 629.49 L396.36 629.75 L397.12 630.48 L397.88 631.41 L398.64 631.51 L399.41 637.38 L400.17 632.08 L400.93 640.41 L401.69 629.36 L402.46 631.62 L403.22 640.34 L403.98 635.36 L404.74 633.09 L405.51 637.51 L406.27 630.05 L407.03 637.06 L407.79 629.41 L408.56 632.75 L409.32 630.84 L410.08 630.88 L410.84 629.68 L411.61 630.40 L412.37 630.41 L413.13 631.37 L413.89 630.05 L414.66 629.13 L415.42 629.44 L416.18 628.99 L416.95 631.32 L417.71 630.53 L418.47 642.34 L419.23 642.36 L420.00 633.16 L420.76 632.70 L421.52 630.49 L422.28 628.97 L423.05 641.93 L423.81 629.12 L424.57 632.29 L425.33 631.34 L426.10 631.81 L426.86 632.82 L427.62 629.01 L428.38 629.83 L429.15 631.61 L429.91 629.14 L430.67 641.93 L431.43 631.08 L432.20 629.57 L432.96 631.71 L433.72 629.41 L434.48 636.13 L435.25 630.84 L436.01 632.19 L436.77 641.15 L437.53 629.01 L438.30 632.09 L439.06 632.75 L439.82 636.36 L440.58 630.58 L441.35 631.54 L442.11 631.64 L442.87 631.75 L443.63 636.80 L444.40 632.30 L445.16 631.58 L445.92 629.07 L446.68 631.74 L447.45 631.45 L448.21 640.82 L448.97 632.75 L449.74 629.64 L450.50 636.69 L451.26 631.96 L452.02 636.09 L452.79 630.40 L453.55 631.09 L454.31 631.18 L455.07 631.48 L455.84 631.62 L456.60 629.89 L457.36 630.89 L458.12 630.99 L458.89 630.49 L459.65 631.64 L460.41 633.09 L461.17 629.72 L461.94 628.94 L462.70 632.53 L463.46 631.35 L464.22 632.06 L464.99 642.21 L465.75 637.63 L466.51 629.54 L467.27 631.04 L468.04 637.32 L468.80 629.41 L469.56 629.10 L470.32 635.27 L471.09 629.83 L471.85 629.72 L472.61 630.85 L473.37 632.72 L474.14 632.38 L474.90 629.51 L475.66 641.26 L476.42 631.62 L477.19 632.86 L477.95 630.90 L478.71 629.49 L479.47 630.78 L480.24 629.47 L481.00 640.51" fill="none" stroke="#058dc7" stroke-width="1.8" stroke-linejoin="round"/></svg><div class="a" style="left:1397px;top:461px;width:10px;height:10px;background:#058dc7"></div><div class="a" style="left:1412px;top:459px;font-size:13px;color:#222">New Visitor</div><div class="a" style="left:1494px;top:461px;width:10px;height:10px;background:#50b432"></div><div class="a" style="left:1509px;top:459px;font-size:13px;color:#222">Returning Visitor</div><svg class="a" style="left:0;top:0" width="1707" height="700"><circle cx="1510.0" cy="583.5" r="92.0" fill="#058dc7"/><path d="M1510.0 583.5 L1430.8 536.7 A92.0 92.0 0 0 1 1510.0 491.5 Z" fill="#50b432" stroke="#fff" stroke-width="1"/><line x1="1510.0" y1="583.5" x2="1510.0" y2="490.5" stroke="#fff" stroke-width="1.2"/><line x1="1510.0" y1="583.5" x2="1430.8" y2="536.7" stroke="#fff" stroke-width="1.2"/><g font-family="Liberation Sans" font-size="9" font-weight="bold" fill="#fff" text-anchor="middle"><text x="1474" y="525">16,5%</text><text x="1546" y="650">83,5%</text></g></svg><div class="a" style="left:116px;top:709px;font-size:12.3px;font-weight:bold;color:#222">Dane demograficzne</div><div class="a" style="left:110px;top:726px;width:480px;height:1px;background:#555"></div><div class="a" style="left:110px;top:727px;width:480px;height:30px;background:#deedf5"></div><div class="a" style="left:116px;top:734px;font-size:13px;color:#222">Język</div><div class="a" style="left:575px;top:738px;width:0;height:0;border-top:4px solid transparent;border-bottom:4px solid transparent;border-left:4px solid #555"></div><div class="a lnk" style="left:116px;top:764px;font-size:13px">Kraj</div><div class="a lnk" style="left:116px;top:794px;font-size:13px">Miejscowość</div><div class="a" style="left:116px;top:829px;font-size:12.3px;font-weight:bold;color:#222">System</div><div class="a" style="left:110px;top:846px;width:480px;height:1px;background:#555"></div><div class="a lnk" style="left:116px;top:854px;font-size:13px">Przeglądarka</div><div class="a lnk" style="left:116px;top:884px;font-size:13px">System operacyjny</div><div class="a lnk" style="left:116px;top:914px;font-size:13px">Dostawca usług</div><div class="a" style="left:116px;top:949px;font-size:12.3px;font-weight:bold;color:#222">Ruch mobilny</div><div class="a" style="left:110px;top:966px;width:480px;height:1px;background:#555"></div><div class="a lnk" style="left:116px;top:974px;font-size:13px">System operacyjny</div><div class="a lnk" style="left:116px;top:1004px;font-size:13px">Dostawca usług</div><div class="a" style="left:639px;top:709px;font-size:12.3px;font-weight:bold;color:#222">Język</div><div class="a" style="left:1434px;top:709px;width:100px;text-align:right;font-size:12.3px;font-weight:bold;color:#222">Użytkownicy</div><div class="a" style="left:1551px;top:709px;font-size:12.3px;font-weight:bold;color:#222">% Użytkownicy</div><div class="a" style="left:610px;top:726px;width:1097px;height:1px;background:#666"></div><div class="a" style="left:610px;top:727px;width:1097px;height:30px;background:#f8f8f8"></div><div class="a" style="left:610px;top:757px;width:1097px;height:1px;background:#d8d8d8"></div><div class="a" style="left:618px;top:734px;font-size:13px;color:#222">1.</div><div class="a lnk" style="left:639px;top:734px;font-size:13px">pl-pl</div><div class="a" style="left:1434px;top:735px;width:100px;text-align:right;font-size:12.3px;color:#222">7 931</div><div class="a" style="left:1551px;top:735px;width:74px;height:15px;background:#058dc7"></div><div class="a" style="left:1635px;top:735px;font-size:12.3px;color:#222">75,60%</div><div class="a" style="left:610px;top:788px;width:1097px;height:1px;background:#d8d8d8"></div><div class="a" style="left:618px;top:765px;font-size:13px;color:#222">2.</div><div class="a lnk" style="left:639px;top:765px;font-size:13px">pl</div><div class="a" style="left:1434px;top:766px;width:100px;text-align:right;font-size:12.3px;color:#222">1 994</div><div class="a" style="left:1551px;top:766px;width:19px;height:15px;background:#058dc7"></div><div class="a" style="left:1580px;top:766px;font-size:12.3px;color:#222">19,01%</div><div class="a" style="left:610px;top:789px;width:1097px;height:30px;background:#f8f8f8"></div><div class="a" style="left:610px;top:819px;width:1097px;height:1px;background:#d8d8d8"></div><div class="a" style="left:618px;top:796px;font-size:13px;color:#222">3.</div><div class="a lnk" style="left:639px;top:796px;font-size:13px">en-us</div><div class="a" style="left:1434px;top:797px;width:100px;text-align:right;font-size:12.3px;color:#222">436</div><div class="a" style="left:1551px;top:797px;width:4px;height:15px;background:#058dc7"></div><div class="a" style="left:1565px;top:797px;font-size:12.3px;color:#222">4,16%</div><div class="a" style="left:610px;top:850px;width:1097px;height:1px;background:#d8d8d8"></div><div class="a" style="left:618px;top:827px;font-size:13px;color:#222">4.</div><div class="a lnk" style="left:639px;top:827px;font-size:13px">en-gb</div><div class="a" style="left:1434px;top:828px;width:100px;text-align:right;font-size:12.3px;color:#222">48</div><div class="a" style="left:1551px;top:827px;width:1.5px;height:16px;background:#058dc7"></div><div class="a" style="left:1562px;top:828px;font-size:12.3px;color:#222">0,46%</div><div class="a" style="left:610px;top:851px;width:1097px;height:30px;background:#f8f8f8"></div><div class="a" style="left:610px;top:881px;width:1097px;height:1px;background:#d8d8d8"></div><div class="a" style="left:618px;top:858px;font-size:13px;color:#222">5.</div><div class="a lnk" style="left:639px;top:858px;font-size:13px">de-de</div><div class="a" style="left:1434px;top:859px;width:100px;text-align:right;font-size:12.3px;color:#222">17</div><div class="a" style="left:1551px;top:858px;width:1.5px;height:16px;background:#058dc7"></div><div class="a" style="left:1562px;top:859px;font-size:12.3px;color:#222">0,16%</div><div class="a" style="left:610px;top:912px;width:1097px;height:1px;background:#d8d8d8"></div><div class="a" style="left:618px;top:889px;font-size:13px;color:#222">6.</div><div class="a lnk" style="left:639px;top:889px;font-size:13px">ru-ru</div><div class="a" style="left:1434px;top:890px;width:100px;text-align:right;font-size:12.3px;color:#222">13</div><div class="a" style="left:1551px;top:889px;width:1.5px;height:16px;background:#058dc7"></div><div class="a" style="left:1562px;top:890px;font-size:12.3px;color:#222">0,12%</div><div class="a" style="left:610px;top:913px;width:1097px;height:30px;background:#f8f8f8"></div><div class="a" style="left:610px;top:943px;width:1097px;height:1px;background:#d8d8d8"></div><div class="a" style="left:618px;top:920px;font-size:13px;color:#222">7.</div><div class="a lnk" style="left:639px;top:920px;font-size:13px">en</div><div class="a" style="left:1434px;top:921px;width:100px;text-align:right;font-size:12.3px;color:#222">10</div><div class="a" style="left:1551px;top:920px;width:1.5px;height:16px;background:#058dc7"></div><div class="a" style="left:1562px;top:921px;font-size:12.3px;color:#222">0,10%</div><div class="a" style="left:610px;top:974px;width:1097px;height:1px;background:#d8d8d8"></div><div class="a" style="left:618px;top:951px;font-size:13px;color:#222">8.</div><div class="a lnk" style="left:639px;top:951px;font-size:13px">fr-fr</div><div class="a" style="left:1434px;top:952px;width:100px;text-align:right;font-size:12.3px;color:#222">6</div><div class="a" style="left:1551px;top:951px;width:1.5px;height:16px;background:#058dc7"></div><div class="a" style="left:1562px;top:952px;font-size:12.3px;color:#222">0,06%</div><div class="a" style="left:610px;top:975px;width:1097px;height:30px;background:#f8f8f8"></div><div class="a" style="left:610px;top:1005px;width:1097px;height:1px;background:#d8d8d8"></div><div class="a" style="left:618px;top:982px;font-size:13px;color:#222">9.</div><div class="a lnk" style="left:639px;top:982px;font-size:13px">de</div><div class="a" style="left:1434px;top:983px;width:100px;text-align:right;font-size:12.3px;color:#222">5</div><div class="a" style="left:1551px;top:982px;width:1.5px;height:16px;background:#058dc7"></div><div class="a" style="left:1562px;top:983px;font-size:12.3px;color:#222">0,05%</div><div class="a" style="left:610px;top:1036px;width:1097px;height:1px;background:#d8d8d8"></div><div class="a" style="left:618px;top:1013px;font-size:13px;color:#222">10.</div><div class="a lnk" style="left:639px;top:1013px;font-size:13px">sv-se</div><div class="a" style="left:1434px;top:1014px;width:100px;text-align:right;font-size:12.3px;color:#222">4</div><div class="a" style="left:1551px;top:1013px;width:1.5px;height:16px;background:#058dc7"></div><div class="a" style="left:1562px;top:1014px;font-size:12.3px;color:#222">0,04%</div></body></html>
